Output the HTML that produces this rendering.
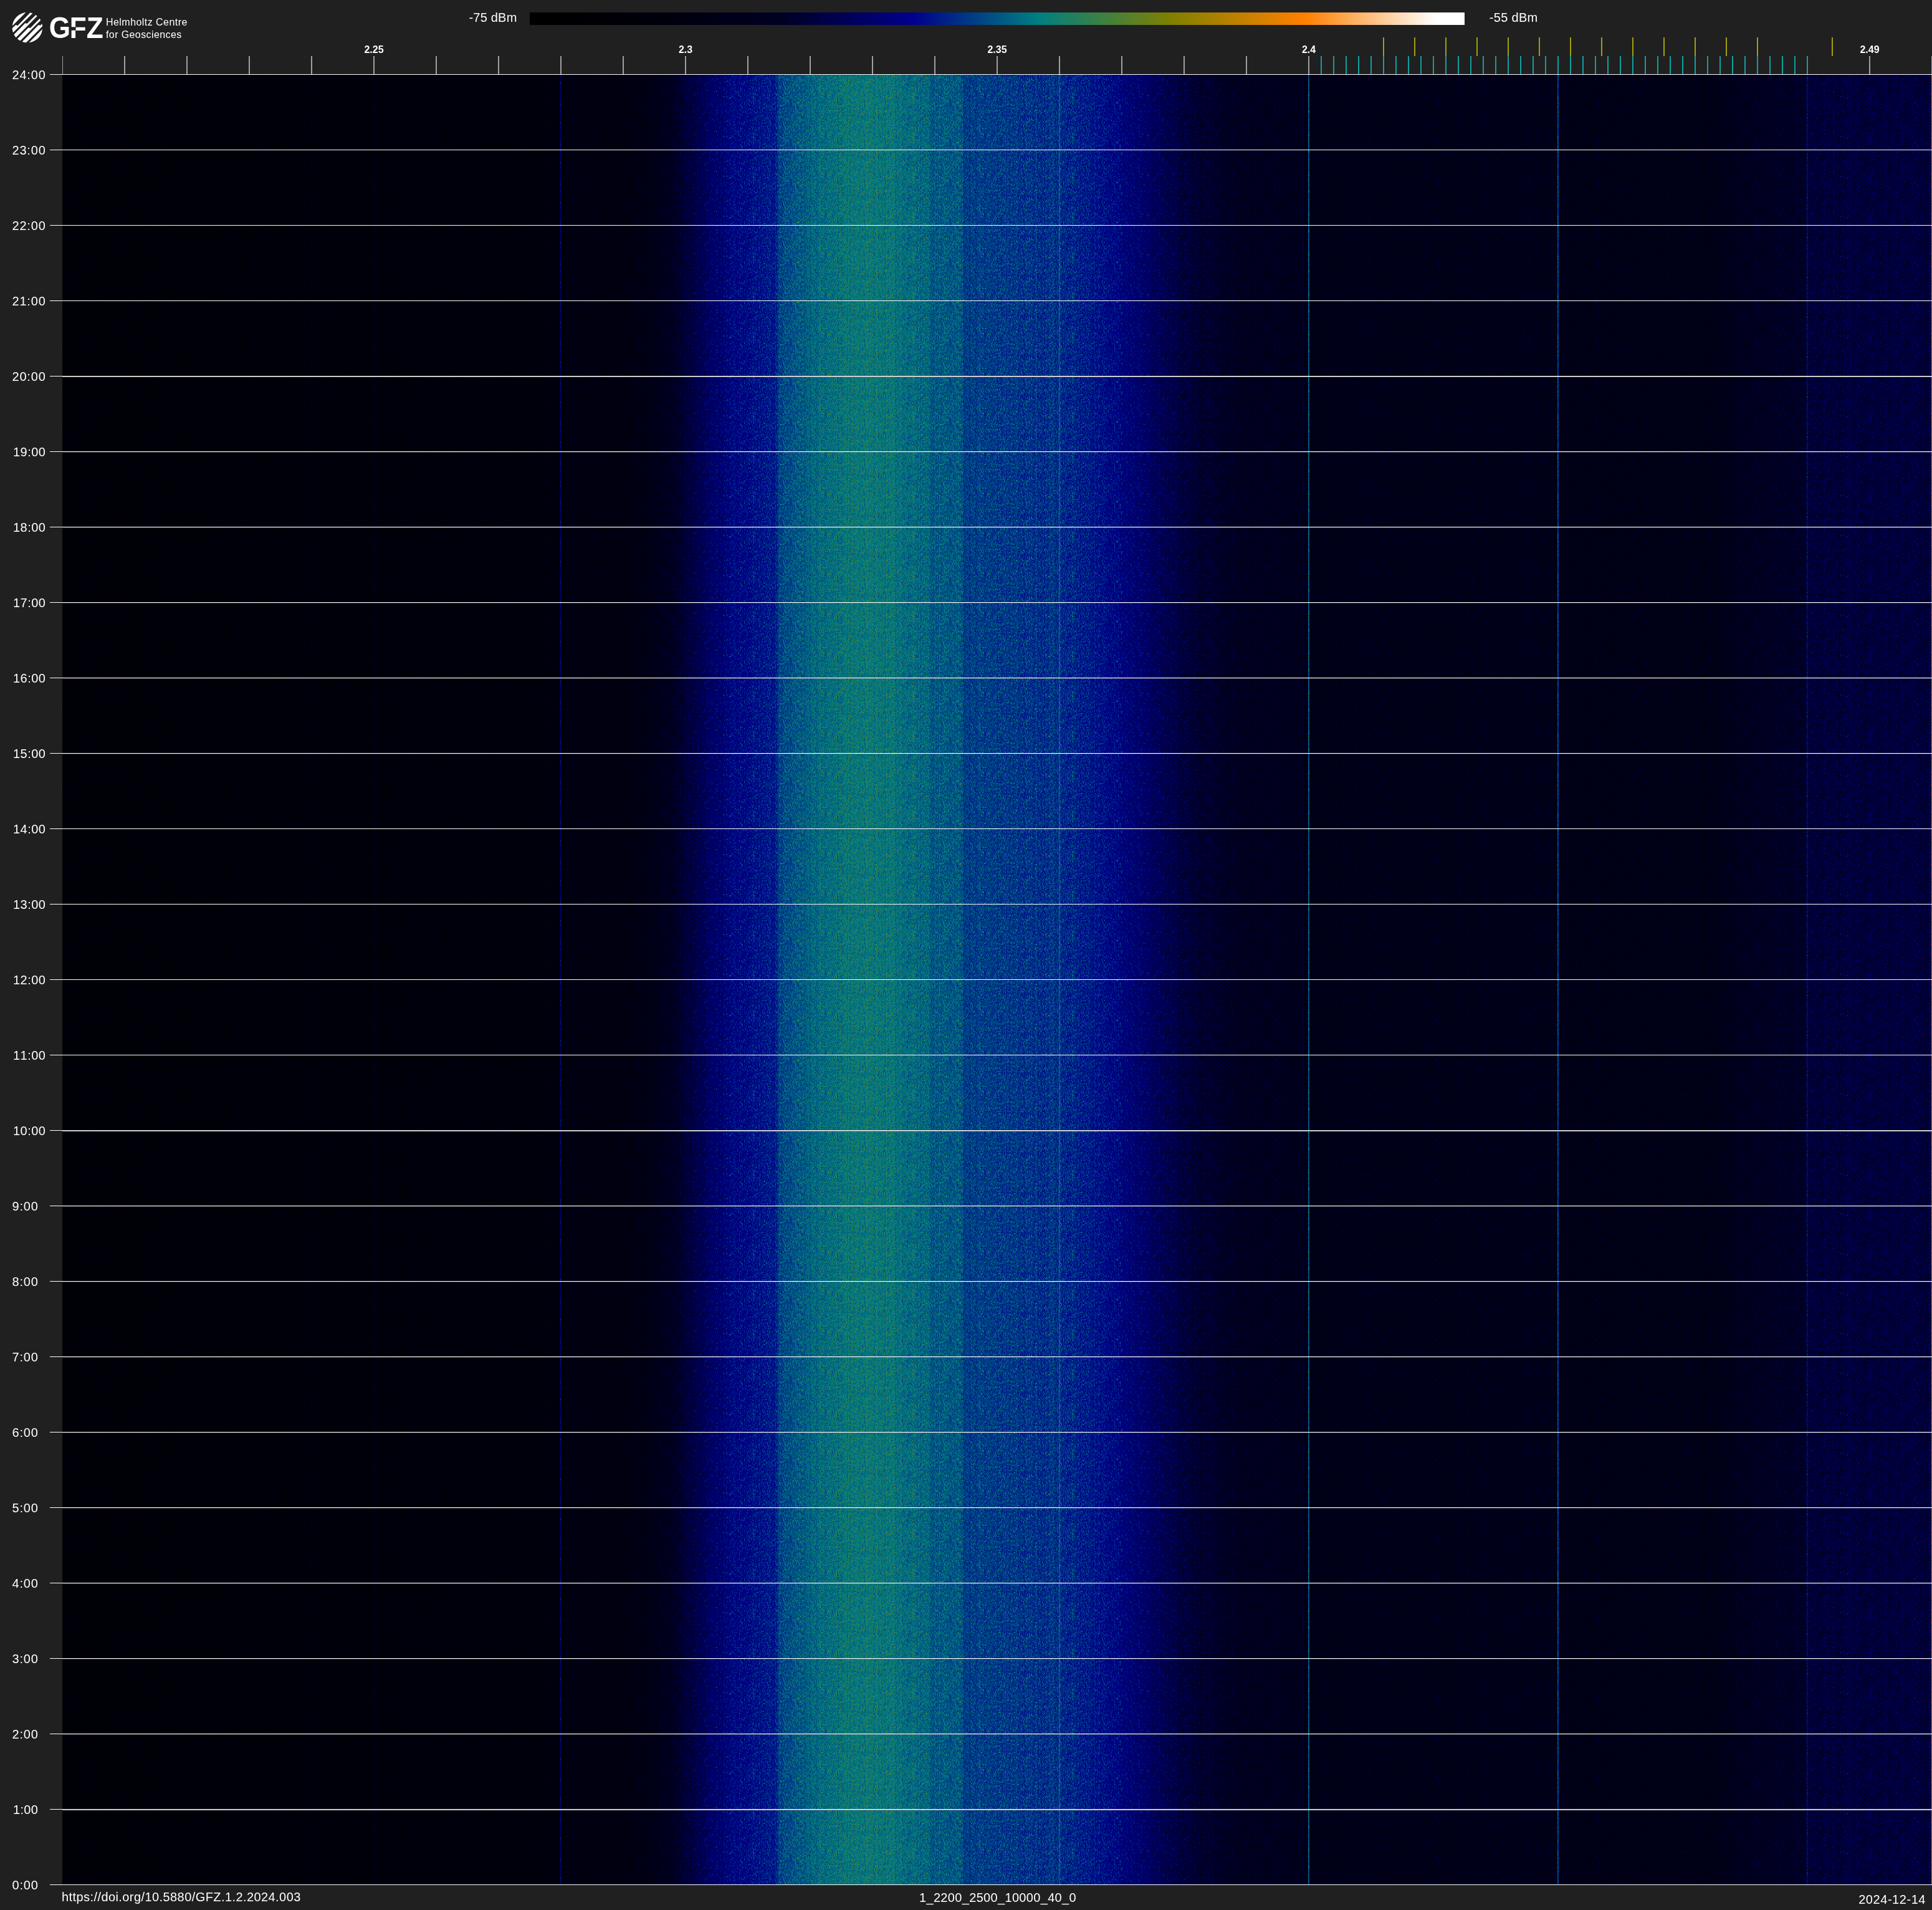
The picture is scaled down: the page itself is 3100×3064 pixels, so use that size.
<!DOCTYPE html>
<html lang="en"><head><meta charset="utf-8"><title>GFZ spectrogram 1_2200_2500_10000_40_0 2024-12-14</title>
<style>html,body{margin:0;padding:0;background:#202020}body{width:3100px;height:3064px}svg{display:block;will-change:transform}text{font-family:"Liberation Sans",Arial,Helvetica,sans-serif;fill:#fff}</style>
</head><body>
<svg width="3100" height="3064" viewBox="0 0 3100 3064" role="img" aria-label="Spectrogram 2.2-2.5 GHz, 2024-12-14">
<defs>
<linearGradient id="cb" x1="0" y1="0" x2="1" y2="0">
<stop offset="0.0000" stop-color="#000000"/>
<stop offset="0.1300" stop-color="#00000a"/>
<stop offset="0.2700" stop-color="#000024"/>
<stop offset="0.4100" stop-color="#00008c"/>
<stop offset="0.5450" stop-color="#008080"/>
<stop offset="0.6860" stop-color="#808000"/>
<stop offset="0.8290" stop-color="#ff8000"/>
<stop offset="0.9700" stop-color="#ffffff"/>
<stop offset="1.0000" stop-color="#ffffff"/>
</linearGradient>
<linearGradient id="vg" gradientUnits="userSpaceOnUse" x1="100" y1="0" x2="3100" y2="0">
<stop offset="0.00000" stop-color="#1a1a1a"/>
<stop offset="0.13333" stop-color="#1f1f1f"/>
<stop offset="0.26600" stop-color="#242424"/>
<stop offset="0.26700" stop-color="#292929"/>
<stop offset="0.30000" stop-color="#2b2b2b"/>
<stop offset="0.31333" stop-color="#323232"/>
<stop offset="0.32567" stop-color="#3e3e3e"/>
<stop offset="0.33333" stop-color="#4a4a4a"/>
<stop offset="0.34233" stop-color="#555555"/>
<stop offset="0.35000" stop-color="#5d5d5d"/>
<stop offset="0.35900" stop-color="#656565"/>
<stop offset="0.36667" stop-color="#6a6a6a"/>
<stop offset="0.38167" stop-color="#707070"/>
<stop offset="0.38333" stop-color="#7a7a7a"/>
<stop offset="0.40333" stop-color="#868686"/>
<stop offset="0.42933" stop-color="#8c8c8c"/>
<stop offset="0.44667" stop-color="#888888"/>
<stop offset="0.46267" stop-color="#858585"/>
<stop offset="0.46400" stop-color="#818181"/>
<stop offset="0.48100" stop-color="#808080"/>
<stop offset="0.48233" stop-color="#7a7a7a"/>
<stop offset="0.51100" stop-color="#777777"/>
<stop offset="0.53333" stop-color="#747474"/>
<stop offset="0.54533" stop-color="#717171"/>
<stop offset="0.56667" stop-color="#656565"/>
<stop offset="0.58333" stop-color="#595959"/>
<stop offset="0.60300" stop-color="#4a4a4a"/>
<stop offset="0.62700" stop-color="#3e3e3e"/>
<stop offset="0.66600" stop-color="#393939"/>
<stop offset="0.66700" stop-color="#343434"/>
<stop offset="0.79933" stop-color="#363636"/>
<stop offset="0.80033" stop-color="#333333"/>
<stop offset="0.88333" stop-color="#333333"/>
<stop offset="0.90000" stop-color="#3c3c3c"/>
<stop offset="0.93267" stop-color="#444444"/>
<stop offset="0.93367" stop-color="#4b4b4b"/>
<stop offset="1.00000" stop-color="#4c4c4c"/>
</linearGradient>
<pattern id="np" patternUnits="userSpaceOnUse" x="100" y="120" width="256" height="64">
<g transform="translate(.5 0)" fill="none" stroke-width="1" stroke-opacity="0.1783" shape-rendering="crispEdges">
<path stroke="#000000" d="M246 0v2M29 4v2M24 8v2M235 8v2M162 12v2M76 16v2M228 16v2M4 18v2M114 18v2M151 18v2M175 18v2M221 26v2M116 30v2M118 38v2M202 50v2M166 52v2M176 52v2M97 54v2M140 56v2M160 56v2M29 58v2M69 62v2"/>
<path stroke="#0b0b0b" d="M105 0v2M118 0v2M122 0v2M228 0v2M17 2v2M29 2v2M114 2v2M166 2v2M226 2v2M4 4v2M22 4v2M33 4v2M115 4v2M149 4v2M162 4v2M176 4v2M185 4v2M254 4v2M23 6v2M63 6v2M98 6v2M176 6v2M200 6v2M71 8v2M175 8v2M204 8v2M166 10v2M175 10v2M219 10v2M114 12v2M168 12v2M184 12v2M226 12v2M240 12v2M34 14v2M90 14v2M100 14v2M114 14v2M183 14v2M71 16v2M79 16v2M213 16v2M220 16v2M17 18v2M79 18v2M108 18v2M200 18v2M160 20v2M162 20v2M194 20v2M198 20v2M215 20v2M75 22v2M118 22v2M130 22v2M213 22v2M4 24v2M126 24v2M194 24v2M204 24v2M223 24v2M29 26v2M148 26v2M175 26v2M194 26v2M43 28v2M56 28v2M101 28v2M118 28v2M126 28v2M232 28v2M79 30v2M94 30v2M108 30v2M201 30v2M7 32v2M23 32v2M118 32v2M176 32v2M196 32v2M200 32v2M211 32v2M254 32v2M6 34v2M58 34v2M71 34v2M97 34v2M175 34v2M151 36v2M56 38v2M73 38v2M235 38v2M254 38v2M6 40v2M13 40v2M105 40v2M175 40v2M176 40v2M181 40v2M186 40v2M199 40v2M204 40v2M226 40v2M59 42v2M148 42v2M175 42v2M247 42v2M40 44v2M166 44v2M168 44v2M221 44v2M40 46v2M68 46v2M122 46v2M123 46v2M145 46v2M186 46v2M200 46v2M223 46v2M7 48v2M17 48v2M140 48v2M249 48v2M35 50v2M38 50v2M81 50v2M93 50v2M240 50v2M6 52v2M40 52v2M83 52v2M4 54v2M17 54v2M39 54v2M75 54v2M223 54v2M4 56v2M67 56v2M95 56v2M162 56v2M187 56v2M109 58v2M118 58v2M168 58v2M176 58v2M202 58v2M246 58v2M76 60v2M185 60v2M223 60v2M7 62v2M37 62v2M105 62v2M194 62v2M204 62v2M211 62v2"/>
<path stroke="#161616" d="M8 0v2M13 0v2M21 0v2M24 0v2M34 0v2M48 0v2M60 0v2M71 0v2M108 0v2M116 0v2M123 0v2M156 0v2M162 0v2M166 0v2M184 0v2M209 0v2M219 0v2M252 0v2M4 2v2M7 2v2M12 2v2M49 2v2M61 2v2M63 2v2M101 2v2M104 2v2M151 2v2M153 2v2M162 2v2M235 2v2M252 2v2M253 2v2M21 4v2M40 4v2M78 4v2M143 4v2M167 4v2M178 4v2M180 4v2M191 4v2M208 4v2M235 4v2M7 6v2M31 6v2M33 6v2M61 6v2M77 6v2M100 6v2M144 6v2M168 6v2M196 6v2M199 6v2M219 6v2M235 6v2M7 8v2M41 8v2M57 8v2M94 8v2M97 8v2M133 8v2M241 8v2M244 8v2M23 10v2M40 10v2M45 10v2M56 10v2M89 10v2M142 10v2M183 10v2M194 10v2M210 10v2M215 10v2M221 10v2M235 10v2M81 12v2M89 12v2M101 12v2M118 12v2M164 12v2M178 12v2M182 12v2M205 12v2M40 14v2M43 14v2M51 14v2M75 14v2M76 14v2M121 14v2M131 14v2M180 14v2M194 14v2M201 14v2M225 14v2M235 14v2M1 16v2M4 16v2M8 16v2M17 16v2M38 16v2M63 16v2M77 16v2M100 16v2M132 16v2M145 16v2M161 16v2M168 16v2M204 16v2M217 16v2M222 16v2M0 18v2M22 18v2M29 18v2M46 18v2M58 18v2M59 18v2M132 18v2M171 18v2M179 18v2M219 18v2M2 20v2M4 20v2M17 20v2M91 20v2M108 20v2M111 20v2M133 20v2M172 20v2M178 20v2M225 20v2M235 20v2M242 20v2M76 22v2M91 22v2M92 22v2M113 22v2M134 22v2M142 22v2M153 22v2M171 22v2M184 22v2M238 22v2M240 22v2M248 22v2M51 24v2M58 24v2M76 24v2M81 24v2M91 24v2M117 24v2M122 24v2M131 24v2M160 24v2M184 24v2M207 24v2M216 24v2M220 24v2M232 24v2M240 24v2M247 24v2M253 24v2M254 24v2M17 26v2M44 26v2M46 26v2M58 26v2M76 26v2M101 26v2M162 26v2M182 26v2M186 26v2M202 26v2M213 26v2M215 26v2M240 26v2M242 26v2M255 26v2M4 28v2M97 28v2M103 28v2M105 28v2M125 28v2M186 28v2M191 28v2M200 28v2M229 28v2M7 30v2M22 30v2M45 30v2M62 30v2M69 30v2M96 30v2M106 30v2M118 30v2M177 30v2M187 30v2M238 30v2M252 30v2M4 32v2M38 32v2M39 32v2M114 32v2M130 32v2M134 32v2M153 32v2M186 32v2M223 32v2M10 34v2M32 34v2M45 34v2M116 34v2M132 34v2M166 34v2M176 34v2M182 34v2M201 34v2M211 34v2M215 34v2M235 34v2M2 36v2M59 36v2M90 36v2M91 36v2M98 36v2M99 36v2M126 36v2M138 36v2M139 36v2M211 36v2M219 36v2M220 36v2M228 36v2M89 38v2M97 38v2M125 38v2M145 38v2M196 38v2M216 38v2M220 38v2M225 38v2M238 38v2M240 38v2M30 40v2M33 40v2M122 40v2M143 40v2M144 40v2M235 40v2M238 40v2M6 42v2M33 42v2M34 42v2M91 42v2M105 42v2M113 42v2M121 42v2M144 42v2M167 42v2M202 42v2M220 42v2M240 42v2M48 44v2M77 44v2M121 44v2M123 44v2M143 44v2M174 44v2M191 44v2M215 44v2M220 44v2M235 44v2M27 46v2M67 46v2M75 46v2M82 46v2M89 46v2M95 46v2M111 46v2M194 46v2M224 46v2M116 48v2M137 48v2M154 48v2M175 48v2M209 48v2M225 48v2M7 50v2M79 50v2M102 50v2M114 50v2M139 50v2M144 50v2M166 50v2M194 50v2M230 50v2M69 52v2M79 52v2M88 52v2M96 52v2M97 52v2M113 52v2M118 52v2M156 52v2M157 52v2M207 52v2M13 54v2M33 54v2M91 54v2M96 54v2M143 54v2M144 54v2M150 54v2M190 54v2M200 54v2M211 54v2M215 54v2M8 56v2M23 56v2M38 56v2M93 56v2M101 56v2M103 56v2M109 56v2M124 56v2M129 56v2M183 56v2M194 56v2M201 56v2M221 56v2M226 56v2M227 56v2M244 56v2M4 58v2M13 58v2M61 58v2M112 58v2M172 58v2M184 58v2M199 58v2M213 58v2M223 58v2M235 58v2M240 58v2M249 58v2M4 60v2M24 60v2M48 60v2M97 60v2M118 60v2M168 60v2M221 60v2M226 60v2M228 60v2M229 60v2M254 60v2M12 62v2M38 62v2M60 62v2M96 62v2M115 62v2M118 62v2M129 62v2M177 62v2M216 62v2"/>
<path stroke="#212121" d="M4 0v2M9 0v2M29 0v2M30 0v2M33 0v2M56 0v2M65 0v2M68 0v2M69 0v2M80 0v2M102 0v2M103 0v2M109 0v2M114 0v2M126 0v2M133 0v2M159 0v2M167 0v2M171 0v2M182 0v2M189 0v2M195 0v2M201 0v2M203 0v2M216 0v2M221 0v2M225 0v2M232 0v2M235 0v2M237 0v2M241 0v2M244 0v2M249 0v2M20 2v2M34 2v2M37 2v2M45 2v2M67 2v2M79 2v2M80 2v2M81 2v2M89 2v2M107 2v2M108 2v2M140 2v2M149 2v2M164 2v2M178 2v2M185 2v2M191 2v2M198 2v2M211 2v2M231 2v2M232 2v2M254 2v2M0 4v2M1 4v2M2 4v2M8 4v2M11 4v2M13 4v2M14 4v2M17 4v2M28 4v2M38 4v2M68 4v2M71 4v2M77 4v2M82 4v2M93 4v2M96 4v2M99 4v2M100 4v2M102 4v2M118 4v2M136 4v2M144 4v2M164 4v2M165 4v2M171 4v2M181 4v2M187 4v2M198 4v2M201 4v2M209 4v2M223 4v2M224 4v2M227 4v2M246 4v2M2 6v2M4 6v2M6 6v2M35 6v2M36 6v2M41 6v2M43 6v2M67 6v2M69 6v2M71 6v2M74 6v2M78 6v2M80 6v2M97 6v2M105 6v2M107 6v2M111 6v2M127 6v2M129 6v2M130 6v2M151 6v2M153 6v2M171 6v2M178 6v2M186 6v2M202 6v2M216 6v2M223 6v2M231 6v2M241 6v2M243 6v2M248 6v2M6 8v2M12 8v2M17 8v2M38 8v2M52 8v2M70 8v2M77 8v2M78 8v2M81 8v2M88 8v2M93 8v2M96 8v2M105 8v2M108 8v2M109 8v2M113 8v2M115 8v2M149 8v2M153 8v2M162 8v2M202 8v2M207 8v2M211 8v2M212 8v2M233 8v2M251 8v2M21 10v2M31 10v2M36 10v2M52 10v2M57 10v2M79 10v2M81 10v2M83 10v2M86 10v2M95 10v2M113 10v2M115 10v2M117 10v2M118 10v2M126 10v2M140 10v2M162 10v2M168 10v2M172 10v2M193 10v2M197 10v2M198 10v2M206 10v2M208 10v2M217 10v2M227 10v2M241 10v2M249 10v2M19 12v2M23 12v2M55 12v2M56 12v2M67 12v2M75 12v2M76 12v2M84 12v2M86 12v2M115 12v2M131 12v2M140 12v2M142 12v2M147 12v2M163 12v2M165 12v2M176 12v2M189 12v2M202 12v2M207 12v2M211 12v2M221 12v2M225 12v2M246 12v2M12 14v2M14 14v2M23 14v2M28 14v2M57 14v2M63 14v2M74 14v2M81 14v2M86 14v2M91 14v2M105 14v2M107 14v2M123 14v2M139 14v2M159 14v2M160 14v2M178 14v2M179 14v2M186 14v2M207 14v2M255 14v2M26 16v2M35 16v2M65 16v2M66 16v2M83 16v2M84 16v2M89 16v2M93 16v2M103 16v2M118 16v2M122 16v2M127 16v2M128 16v2M144 16v2M159 16v2M186 16v2M196 16v2M198 16v2M199 16v2M231 16v2M238 16v2M254 16v2M2 18v2M12 18v2M14 18v2M33 18v2M34 18v2M38 18v2M55 18v2M56 18v2M67 18v2M88 18v2M92 18v2M100 18v2M105 18v2M113 18v2M165 18v2M174 18v2M182 18v2M196 18v2M208 18v2M211 18v2M221 18v2M240 18v2M244 18v2M8 20v2M13 20v2M15 20v2M29 20v2M36 20v2M62 20v2M63 20v2M66 20v2M68 20v2M96 20v2M104 20v2M109 20v2M112 20v2M129 20v2M138 20v2M151 20v2M161 20v2M174 20v2M175 20v2M185 20v2M186 20v2M205 20v2M211 20v2M228 20v2M245 20v2M247 20v2M255 20v2M15 22v2M23 22v2M24 22v2M31 22v2M35 22v2M43 22v2M45 22v2M48 22v2M55 22v2M56 22v2M69 22v2M74 22v2M87 22v2M95 22v2M106 22v2M114 22v2M119 22v2M123 22v2M147 22v2M154 22v2M175 22v2M205 22v2M206 22v2M249 22v2M254 22v2M22 24v2M31 24v2M53 24v2M75 24v2M84 24v2M96 24v2M98 24v2M99 24v2M105 24v2M110 24v2M111 24v2M140 24v2M151 24v2M162 24v2M163 24v2M168 24v2M174 24v2M195 24v2M202 24v2M213 24v2M221 24v2M224 24v2M242 24v2M249 24v2M251 24v2M13 26v2M15 26v2M23 26v2M35 26v2M36 26v2M40 26v2M45 26v2M98 26v2M131 26v2M137 26v2M144 26v2M146 26v2M154 26v2M156 26v2M159 26v2M165 26v2M166 26v2M167 26v2M180 26v2M188 26v2M205 26v2M226 26v2M238 26v2M5 28v2M9 28v2M15 28v2M17 28v2M24 28v2M45 28v2M46 28v2M58 28v2M66 28v2M82 28v2M93 28v2M96 28v2M98 28v2M123 28v2M132 28v2M143 28v2M150 28v2M160 28v2M161 28v2M162 28v2M167 28v2M172 28v2M173 28v2M185 28v2M202 28v2M216 28v2M231 28v2M239 28v2M246 28v2M0 30v2M23 30v2M29 30v2M31 30v2M32 30v2M36 30v2M63 30v2M74 30v2M83 30v2M90 30v2M92 30v2M112 30v2M143 30v2M147 30v2M154 30v2M172 30v2M200 30v2M211 30v2M235 30v2M245 30v2M22 32v2M31 32v2M59 32v2M62 32v2M67 32v2M69 32v2M75 32v2M105 32v2M108 32v2M120 32v2M128 32v2M129 32v2M137 32v2M142 32v2M146 32v2M162 32v2M166 32v2M169 32v2M184 32v2M204 32v2M212 32v2M239 32v2M2 34v2M28 34v2M33 34v2M56 34v2M89 34v2M90 34v2M91 34v2M93 34v2M105 34v2M123 34v2M131 34v2M149 34v2M180 34v2M183 34v2M198 34v2M200 34v2M219 34v2M223 34v2M27 36v2M30 36v2M32 36v2M40 36v2M75 36v2M79 36v2M82 36v2M93 36v2M94 36v2M96 36v2M110 36v2M122 36v2M125 36v2M149 36v2M153 36v2M163 36v2M170 36v2M180 36v2M205 36v2M212 36v2M214 36v2M225 36v2M246 36v2M250 36v2M4 38v2M6 38v2M17 38v2M21 38v2M39 38v2M46 38v2M61 38v2M71 38v2M75 38v2M98 38v2M101 38v2M108 38v2M141 38v2M147 38v2M166 38v2M167 38v2M185 38v2M189 38v2M194 38v2M198 38v2M203 38v2M213 38v2M219 38v2M221 38v2M223 38v2M224 38v2M39 40v2M66 40v2M75 40v2M96 40v2M107 40v2M129 40v2M131 40v2M158 40v2M171 40v2M173 40v2M180 40v2M194 40v2M227 40v2M232 40v2M4 42v2M7 42v2M8 42v2M11 42v2M20 42v2M40 42v2M50 42v2M56 42v2M87 42v2M93 42v2M96 42v2M108 42v2M116 42v2M151 42v2M156 42v2M162 42v2M171 42v2M187 42v2M193 42v2M194 42v2M197 42v2M200 42v2M212 42v2M222 42v2M228 42v2M242 42v2M6 44v2M17 44v2M68 44v2M90 44v2M101 44v2M109 44v2M112 44v2M134 44v2M140 44v2M144 44v2M146 44v2M151 44v2M160 44v2M164 44v2M195 44v2M226 44v2M228 44v2M241 44v2M243 44v2M246 44v2M22 46v2M32 46v2M46 46v2M71 46v2M79 46v2M83 46v2M93 46v2M97 46v2M98 46v2M120 46v2M128 46v2M131 46v2M143 46v2M167 46v2M173 46v2M180 46v2M189 46v2M207 46v2M218 46v2M219 46v2M222 46v2M225 46v2M226 46v2M246 46v2M0 48v2M6 48v2M23 48v2M24 48v2M56 48v2M60 48v2M61 48v2M68 48v2M70 48v2M91 48v2M95 48v2M101 48v2M114 48v2M135 48v2M143 48v2M145 48v2M146 48v2M178 48v2M181 48v2M204 48v2M216 48v2M238 48v2M240 48v2M17 50v2M46 50v2M59 50v2M62 50v2M63 50v2M68 50v2M71 50v2M80 50v2M91 50v2M97 50v2M99 50v2M133 50v2M136 50v2M150 50v2M164 50v2M175 50v2M187 50v2M209 50v2M214 50v2M245 50v2M248 50v2M249 50v2M254 50v2M255 50v2M15 52v2M24 52v2M43 52v2M44 52v2M68 52v2M77 52v2M92 52v2M104 52v2M122 52v2M125 52v2M149 52v2M155 52v2M168 52v2M169 52v2M196 52v2M213 52v2M216 52v2M217 52v2M226 52v2M229 52v2M231 52v2M232 52v2M235 52v2M255 52v2M1 54v2M3 54v2M8 54v2M21 54v2M31 54v2M34 54v2M40 54v2M43 54v2M45 54v2M88 54v2M108 54v2M122 54v2M147 54v2M156 54v2M158 54v2M162 54v2M186 54v2M206 54v2M222 54v2M226 54v2M235 54v2M240 54v2M22 56v2M56 56v2M77 56v2M78 56v2M87 56v2M90 56v2M102 56v2M114 56v2M117 56v2M122 56v2M133 56v2M148 56v2M150 56v2M157 56v2M169 56v2M170 56v2M184 56v2M225 56v2M235 56v2M240 56v2M246 56v2M255 56v2M0 58v2M56 58v2M58 58v2M64 58v2M76 58v2M79 58v2M89 58v2M92 58v2M103 58v2M114 58v2M146 58v2M196 58v2M209 58v2M0 60v2M6 60v2M8 60v2M13 60v2M17 60v2M21 60v2M40 60v2M43 60v2M56 60v2M57 60v2M73 60v2M99 60v2M100 60v2M116 60v2M144 60v2M145 60v2M147 60v2M164 60v2M170 60v2M184 60v2M188 60v2M196 60v2M214 60v2M220 60v2M242 60v2M245 60v2M255 60v2M24 62v2M28 62v2M30 62v2M39 62v2M40 62v2M43 62v2M48 62v2M50 62v2M79 62v2M89 62v2M94 62v2M97 62v2M100 62v2M103 62v2M116 62v2M121 62v2M126 62v2M133 62v2M140 62v2M146 62v2M159 62v2M166 62v2M168 62v2M176 62v2M185 62v2M187 62v2M199 62v2M202 62v2M207 62v2M221 62v2M231 62v2"/>
<path stroke="#2c2c2c" d="M10 0v2M15 0v2M37 0v2M40 0v2M41 0v2M57 0v2M77 0v2M81 0v2M86 0v2M89 0v2M93 0v2M113 0v2M131 0v2M132 0v2M140 0v2M143 0v2M157 0v2M175 0v2M185 0v2M187 0v2M190 0v2M194 0v2M196 0v2M198 0v2M206 0v2M212 0v2M213 0v2M215 0v2M220 0v2M227 0v2M229 0v2M231 0v2M238 0v2M242 0v2M247 0v2M248 0v2M3 2v2M8 2v2M15 2v2M25 2v2M30 2v2M40 2v2M70 2v2M71 2v2M84 2v2M85 2v2M93 2v2M98 2v2M103 2v2M117 2v2M118 2v2M121 2v2M130 2v2M134 2v2M141 2v2M142 2v2M170 2v2M207 2v2M213 2v2M216 2v2M220 2v2M243 2v2M244 2v2M245 2v2M249 2v2M3 4v2M23 4v2M27 4v2M34 4v2M36 4v2M52 4v2M56 4v2M61 4v2M65 4v2M69 4v2M80 4v2M83 4v2M91 4v2M97 4v2M116 4v2M123 4v2M135 4v2M137 4v2M140 4v2M163 4v2M196 4v2M197 4v2M207 4v2M210 4v2M212 4v2M220 4v2M228 4v2M243 4v2M247 4v2M250 4v2M11 6v2M14 6v2M17 6v2M22 6v2M46 6v2M56 6v2M75 6v2M76 6v2M79 6v2M83 6v2M92 6v2M102 6v2M133 6v2M140 6v2M143 6v2M146 6v2M175 6v2M214 6v2M220 6v2M237 6v2M240 6v2M246 6v2M250 6v2M0 8v2M1 8v2M11 8v2M14 8v2M19 8v2M31 8v2M32 8v2M34 8v2M37 8v2M50 8v2M59 8v2M75 8v2M98 8v2M100 8v2M116 8v2M122 8v2M143 8v2M156 8v2M176 8v2M177 8v2M180 8v2M191 8v2M194 8v2M201 8v2M216 8v2M248 8v2M249 8v2M252 8v2M255 8v2M20 10v2M39 10v2M48 10v2M63 10v2M65 10v2M66 10v2M73 10v2M77 10v2M78 10v2M80 10v2M84 10v2M91 10v2M96 10v2M99 10v2M101 10v2M102 10v2M127 10v2M133 10v2M134 10v2M137 10v2M138 10v2M145 10v2M146 10v2M148 10v2M157 10v2M165 10v2M171 10v2M179 10v2M180 10v2M189 10v2M202 10v2M223 10v2M238 10v2M239 10v2M246 10v2M1 12v2M2 12v2M3 12v2M8 12v2M29 12v2M34 12v2M46 12v2M61 12v2M64 12v2M85 12v2M91 12v2M95 12v2M97 12v2M107 12v2M108 12v2M129 12v2M138 12v2M151 12v2M155 12v2M156 12v2M159 12v2M174 12v2M214 12v2M215 12v2M220 12v2M229 12v2M245 12v2M250 12v2M4 14v2M15 14v2M22 14v2M30 14v2M31 14v2M37 14v2M39 14v2M45 14v2M50 14v2M62 14v2M67 14v2M73 14v2M79 14v2M89 14v2M96 14v2M103 14v2M106 14v2M108 14v2M124 14v2M126 14v2M136 14v2M137 14v2M138 14v2M140 14v2M145 14v2M153 14v2M166 14v2M169 14v2M170 14v2M172 14v2M174 14v2M182 14v2M195 14v2M209 14v2M217 14v2M218 14v2M223 14v2M229 14v2M238 14v2M239 14v2M251 14v2M14 16v2M19 16v2M40 16v2M57 16v2M75 16v2M82 16v2M85 16v2M87 16v2M101 16v2M102 16v2M130 16v2M131 16v2M136 16v2M141 16v2M170 16v2M175 16v2M177 16v2M180 16v2M181 16v2M185 16v2M188 16v2M189 16v2M190 16v2M210 16v2M216 16v2M221 16v2M227 16v2M230 16v2M236 16v2M240 16v2M245 16v2M247 16v2M248 16v2M253 16v2M1 18v2M7 18v2M23 18v2M37 18v2M42 18v2M48 18v2M62 18v2M65 18v2M69 18v2M70 18v2M76 18v2M78 18v2M85 18v2M93 18v2M102 18v2M118 18v2M137 18v2M142 18v2M145 18v2M156 18v2M166 18v2M169 18v2M176 18v2M181 18v2M198 18v2M204 18v2M209 18v2M215 18v2M228 18v2M232 18v2M246 18v2M249 18v2M250 18v2M9 20v2M10 20v2M12 20v2M19 20v2M21 20v2M34 20v2M35 20v2M40 20v2M50 20v2M69 20v2M70 20v2M71 20v2M81 20v2M98 20v2M101 20v2M102 20v2M106 20v2M118 20v2M126 20v2M137 20v2M143 20v2M150 20v2M152 20v2M156 20v2M166 20v2M168 20v2M170 20v2M171 20v2M200 20v2M208 20v2M222 20v2M224 20v2M229 20v2M234 20v2M251 20v2M1 22v2M10 22v2M39 22v2M61 22v2M70 22v2M82 22v2M96 22v2M105 22v2M169 22v2M172 22v2M178 22v2M181 22v2M188 22v2M190 22v2M194 22v2M220 22v2M234 22v2M245 22v2M253 22v2M6 24v2M7 24v2M20 24v2M23 24v2M26 24v2M28 24v2M40 24v2M41 24v2M52 24v2M57 24v2M61 24v2M67 24v2M68 24v2M82 24v2M85 24v2M100 24v2M108 24v2M115 24v2M118 24v2M120 24v2M123 24v2M128 24v2M130 24v2M137 24v2M141 24v2M146 24v2M154 24v2M157 24v2M158 24v2M165 24v2M166 24v2M175 24v2M177 24v2M183 24v2M187 24v2M199 24v2M200 24v2M201 24v2M235 24v2M6 26v2M14 26v2M24 26v2M31 26v2M37 26v2M39 26v2M60 26v2M68 26v2M71 26v2M74 26v2M81 26v2M85 26v2M88 26v2M92 26v2M95 26v2M106 26v2M108 26v2M115 26v2M122 26v2M128 26v2M132 26v2M181 26v2M185 26v2M199 26v2M203 26v2M212 26v2M223 26v2M228 26v2M230 26v2M233 26v2M239 26v2M254 26v2M6 28v2M10 28v2M11 28v2M13 28v2M22 28v2M27 28v2M31 28v2M34 28v2M40 28v2M41 28v2M52 28v2M65 28v2M77 28v2M81 28v2M91 28v2M95 28v2M112 28v2M113 28v2M114 28v2M130 28v2M144 28v2M149 28v2M154 28v2M156 28v2M164 28v2M198 28v2M206 28v2M215 28v2M217 28v2M237 28v2M247 28v2M5 30v2M21 30v2M35 30v2M38 30v2M57 30v2M65 30v2M103 30v2M104 30v2M126 30v2M129 30v2M151 30v2M162 30v2M170 30v2M171 30v2M180 30v2M185 30v2M186 30v2M189 30v2M214 30v2M215 30v2M217 30v2M232 30v2M240 30v2M241 30v2M253 30v2M1 32v2M6 32v2M15 32v2M36 32v2M46 32v2M50 32v2M64 32v2M97 32v2M123 32v2M126 32v2M138 32v2M140 32v2M150 32v2M171 32v2M179 32v2M193 32v2M219 32v2M225 32v2M227 32v2M231 32v2M4 34v2M17 34v2M22 34v2M26 34v2M29 34v2M36 34v2M39 34v2M53 34v2M55 34v2M61 34v2M63 34v2M67 34v2M79 34v2M86 34v2M88 34v2M108 34v2M115 34v2M121 34v2M124 34v2M134 34v2M156 34v2M171 34v2M179 34v2M190 34v2M195 34v2M199 34v2M202 34v2M208 34v2M229 34v2M240 34v2M242 34v2M243 34v2M248 34v2M254 34v2M255 34v2M11 36v2M20 36v2M33 36v2M57 36v2M58 36v2M63 36v2M73 36v2M80 36v2M83 36v2M92 36v2M102 36v2M106 36v2M141 36v2M148 36v2M152 36v2M160 36v2M188 36v2M196 36v2M201 36v2M208 36v2M209 36v2M226 36v2M251 36v2M253 36v2M11 38v2M13 38v2M20 38v2M22 38v2M24 38v2M36 38v2M51 38v2M53 38v2M60 38v2M62 38v2M63 38v2M69 38v2M72 38v2M81 38v2M90 38v2M93 38v2M116 38v2M122 38v2M129 38v2M131 38v2M136 38v2M151 38v2M154 38v2M160 38v2M168 38v2M171 38v2M175 38v2M177 38v2M184 38v2M193 38v2M201 38v2M204 38v2M241 38v2M246 38v2M247 38v2M7 40v2M14 40v2M31 40v2M40 40v2M43 40v2M48 40v2M52 40v2M58 40v2M59 40v2M69 40v2M71 40v2M72 40v2M74 40v2M82 40v2M86 40v2M97 40v2M101 40v2M114 40v2M130 40v2M145 40v2M146 40v2M155 40v2M174 40v2M184 40v2M187 40v2M196 40v2M210 40v2M212 40v2M219 40v2M223 40v2M225 40v2M229 40v2M246 40v2M1 42v2M12 42v2M35 42v2M44 42v2M55 42v2M61 42v2M63 42v2M83 42v2M95 42v2M98 42v2M102 42v2M124 42v2M125 42v2M130 42v2M133 42v2M143 42v2M146 42v2M150 42v2M153 42v2M154 42v2M159 42v2M161 42v2M179 42v2M189 42v2M201 42v2M205 42v2M216 42v2M219 42v2M224 42v2M226 42v2M229 42v2M255 42v2M2 44v2M23 44v2M29 44v2M30 44v2M31 44v2M56 44v2M59 44v2M60 44v2M64 44v2M69 44v2M73 44v2M79 44v2M83 44v2M93 44v2M99 44v2M108 44v2M115 44v2M116 44v2M117 44v2M133 44v2M162 44v2M180 44v2M189 44v2M192 44v2M193 44v2M197 44v2M198 44v2M200 44v2M204 44v2M208 44v2M209 44v2M210 44v2M213 44v2M214 44v2M234 44v2M244 44v2M7 46v2M19 46v2M20 46v2M23 46v2M35 46v2M38 46v2M60 46v2M61 46v2M73 46v2M87 46v2M108 46v2M130 46v2M137 46v2M147 46v2M169 46v2M198 46v2M202 46v2M206 46v2M213 46v2M230 46v2M240 46v2M245 46v2M250 46v2M254 46v2M1 48v2M13 48v2M22 48v2M26 48v2M29 48v2M40 48v2M43 48v2M44 48v2M45 48v2M50 48v2M51 48v2M67 48v2M72 48v2M79 48v2M84 48v2M86 48v2M92 48v2M93 48v2M104 48v2M107 48v2M118 48v2M126 48v2M138 48v2M168 48v2M172 48v2M182 48v2M186 48v2M187 48v2M188 48v2M213 48v2M221 48v2M233 48v2M9 50v2M30 50v2M40 50v2M52 50v2M77 50v2M85 50v2M98 50v2M103 50v2M116 50v2M118 50v2M122 50v2M125 50v2M126 50v2M141 50v2M142 50v2M146 50v2M148 50v2M151 50v2M156 50v2M162 50v2M172 50v2M181 50v2M186 50v2M196 50v2M200 50v2M204 50v2M212 50v2M220 50v2M231 50v2M236 50v2M238 50v2M239 50v2M241 50v2M243 50v2M8 52v2M17 52v2M22 52v2M37 52v2M39 52v2M41 52v2M46 52v2M50 52v2M57 52v2M58 52v2M59 52v2M61 52v2M62 52v2M71 52v2M75 52v2M76 52v2M81 52v2M82 52v2M90 52v2M93 52v2M107 52v2M121 52v2M124 52v2M130 52v2M140 52v2M146 52v2M160 52v2M175 52v2M177 52v2M187 52v2M191 52v2M194 52v2M202 52v2M204 52v2M206 52v2M221 52v2M224 52v2M228 52v2M246 52v2M252 52v2M23 54v2M24 54v2M26 54v2M29 54v2M37 54v2M50 54v2M54 54v2M56 54v2M59 54v2M69 54v2M78 54v2M83 54v2M84 54v2M87 54v2M94 54v2M104 54v2M124 54v2M135 54v2M141 54v2M160 54v2M164 54v2M168 54v2M175 54v2M178 54v2M183 54v2M194 54v2M198 54v2M207 54v2M210 54v2M220 54v2M228 54v2M230 54v2M239 54v2M242 54v2M3 56v2M5 56v2M11 56v2M44 56v2M50 56v2M59 56v2M61 56v2M66 56v2M75 56v2M80 56v2M84 56v2M94 56v2M100 56v2M121 56v2M134 56v2M151 56v2M152 56v2M159 56v2M174 56v2M182 56v2M185 56v2M189 56v2M204 56v2M215 56v2M228 56v2M238 56v2M245 56v2M247 56v2M252 56v2M9 58v2M14 58v2M20 58v2M22 58v2M53 58v2M54 58v2M83 58v2M94 58v2M110 58v2M122 58v2M126 58v2M142 58v2M144 58v2M151 58v2M159 58v2M166 58v2M201 58v2M204 58v2M217 58v2M221 58v2M224 58v2M228 58v2M232 58v2M234 58v2M241 58v2M22 60v2M33 60v2M36 60v2M38 60v2M39 60v2M46 60v2M51 60v2M65 60v2M69 60v2M71 60v2M77 60v2M86 60v2M90 60v2M106 60v2M108 60v2M111 60v2M114 60v2M121 60v2M125 60v2M135 60v2M136 60v2M138 60v2M146 60v2M149 60v2M166 60v2M174 60v2M175 60v2M178 60v2M183 60v2M186 60v2M189 60v2M191 60v2M193 60v2M199 60v2M210 60v2M211 60v2M215 60v2M217 60v2M219 60v2M227 60v2M232 60v2M238 60v2M239 60v2M247 60v2M253 60v2M8 62v2M10 62v2M17 62v2M20 62v2M31 62v2M36 62v2M49 62v2M57 62v2M72 62v2M77 62v2M80 62v2M84 62v2M88 62v2M92 62v2M93 62v2M98 62v2M108 62v2M111 62v2M113 62v2M120 62v2M128 62v2M130 62v2M136 62v2M144 62v2M153 62v2M165 62v2M172 62v2M180 62v2M181 62v2M189 62v2M201 62v2M203 62v2M228 62v2M234 62v2M241 62v2M243 62v2M244 62v2M252 62v2"/>
<path stroke="#373737" d="M1 0v2M2 0v2M7 0v2M28 0v2M39 0v2M49 0v2M51 0v2M59 0v2M67 0v2M70 0v2M75 0v2M76 0v2M78 0v2M87 0v2M91 0v2M112 0v2M124 0v2M136 0v2M150 0v2M154 0v2M158 0v2M160 0v2M164 0v2M173 0v2M174 0v2M205 0v2M208 0v2M214 0v2M226 0v2M234 0v2M236 0v2M240 0v2M245 0v2M254 0v2M1 2v2M6 2v2M11 2v2M14 2v2M23 2v2M31 2v2M33 2v2M41 2v2M46 2v2M65 2v2M73 2v2M83 2v2M87 2v2M91 2v2M95 2v2M102 2v2M113 2v2M123 2v2M135 2v2M136 2v2M137 2v2M159 2v2M161 2v2M163 2v2M168 2v2M176 2v2M187 2v2M188 2v2M189 2v2M199 2v2M200 2v2M202 2v2M203 2v2M219 2v2M238 2v2M241 2v2M255 2v2M16 4v2M18 4v2M20 4v2M25 4v2M30 4v2M45 4v2M46 4v2M53 4v2M55 4v2M59 4v2M66 4v2M72 4v2M76 4v2M81 4v2M92 4v2M104 4v2M120 4v2M131 4v2M152 4v2M159 4v2M169 4v2M173 4v2M189 4v2M192 4v2M200 4v2M219 4v2M230 4v2M238 4v2M248 4v2M252 4v2M1 6v2M5 6v2M8 6v2M20 6v2M28 6v2M38 6v2M39 6v2M40 6v2M42 6v2M48 6v2M49 6v2M51 6v2M54 6v2M57 6v2M81 6v2M86 6v2M96 6v2M99 6v2M101 6v2M104 6v2M112 6v2M117 6v2M119 6v2M125 6v2M128 6v2M134 6v2M149 6v2M150 6v2M164 6v2M166 6v2M169 6v2M173 6v2M183 6v2M185 6v2M194 6v2M195 6v2M201 6v2M203 6v2M209 6v2M217 6v2M228 6v2M233 6v2M251 6v2M254 6v2M9 8v2M42 8v2M58 8v2M60 8v2M63 8v2M65 8v2M67 8v2M72 8v2M73 8v2M85 8v2M91 8v2M92 8v2M106 8v2M114 8v2M118 8v2M124 8v2M128 8v2M130 8v2M137 8v2M140 8v2M144 8v2M151 8v2M152 8v2M166 8v2M169 8v2M170 8v2M171 8v2M172 8v2M179 8v2M182 8v2M184 8v2M187 8v2M200 8v2M210 8v2M219 8v2M228 8v2M238 8v2M242 8v2M245 8v2M0 10v2M2 10v2M15 10v2M18 10v2M24 10v2M60 10v2M62 10v2M71 10v2M88 10v2M90 10v2M92 10v2M100 10v2M104 10v2M105 10v2M107 10v2M119 10v2M124 10v2M135 10v2M154 10v2M174 10v2M178 10v2M181 10v2M182 10v2M186 10v2M195 10v2M196 10v2M209 10v2M214 10v2M222 10v2M226 10v2M230 10v2M240 10v2M6 12v2M21 12v2M25 12v2M33 12v2M38 12v2M40 12v2M42 12v2M63 12v2M92 12v2M99 12v2M116 12v2M117 12v2M122 12v2M123 12v2M126 12v2M134 12v2M160 12v2M177 12v2M180 12v2M185 12v2M186 12v2M187 12v2M197 12v2M204 12v2M208 12v2M210 12v2M224 12v2M233 12v2M236 12v2M242 12v2M247 12v2M254 12v2M1 14v2M6 14v2M7 14v2M9 14v2M13 14v2M16 14v2M17 14v2M20 14v2M21 14v2M25 14v2M29 14v2M35 14v2M36 14v2M55 14v2M60 14v2M71 14v2M72 14v2M77 14v2M78 14v2M82 14v2M101 14v2M116 14v2M130 14v2M142 14v2M150 14v2M151 14v2M156 14v2M162 14v2M173 14v2M176 14v2M185 14v2M191 14v2M193 14v2M198 14v2M221 14v2M230 14v2M232 14v2M245 14v2M250 14v2M252 14v2M0 16v2M9 16v2M18 16v2M34 16v2M39 16v2M42 16v2M50 16v2M61 16v2M68 16v2M74 16v2M91 16v2M92 16v2M97 16v2M99 16v2M109 16v2M112 16v2M113 16v2M115 16v2M116 16v2M124 16v2M140 16v2M146 16v2M149 16v2M150 16v2M158 16v2M169 16v2M205 16v2M215 16v2M219 16v2M233 16v2M246 16v2M255 16v2M3 18v2M28 18v2M41 18v2M54 18v2M72 18v2M73 18v2M83 18v2M86 18v2M91 18v2M96 18v2M117 18v2M119 18v2M123 18v2M124 18v2M125 18v2M130 18v2M147 18v2M149 18v2M160 18v2M162 18v2M163 18v2M167 18v2M168 18v2M170 18v2M173 18v2M183 18v2M184 18v2M186 18v2M187 18v2M213 18v2M216 18v2M241 18v2M245 18v2M247 18v2M16 20v2M23 20v2M26 20v2M39 20v2M58 20v2M72 20v2M73 20v2M74 20v2M76 20v2M78 20v2M83 20v2M90 20v2M99 20v2M110 20v2M115 20v2M119 20v2M124 20v2M132 20v2M146 20v2M148 20v2M155 20v2M157 20v2M167 20v2M176 20v2M177 20v2M182 20v2M183 20v2M196 20v2M201 20v2M218 20v2M220 20v2M226 20v2M232 20v2M236 20v2M239 20v2M240 20v2M246 20v2M0 22v2M8 22v2M17 22v2M20 22v2M37 22v2M46 22v2M52 22v2M68 22v2M71 22v2M73 22v2M98 22v2M115 22v2M124 22v2M125 22v2M144 22v2M167 22v2M182 22v2M185 22v2M207 22v2M209 22v2M221 22v2M226 22v2M233 22v2M244 22v2M246 22v2M36 24v2M54 24v2M56 24v2M74 24v2M78 24v2M79 24v2M103 24v2M106 24v2M121 24v2M125 24v2M142 24v2M144 24v2M172 24v2M182 24v2M196 24v2M197 24v2M209 24v2M210 24v2M211 24v2M214 24v2M218 24v2M229 24v2M244 24v2M3 26v2M4 26v2M16 26v2M20 26v2M65 26v2M69 26v2M70 26v2M78 26v2M80 26v2M83 26v2M90 26v2M96 26v2M102 26v2M105 26v2M117 26v2M118 26v2M121 26v2M130 26v2M133 26v2M138 26v2M139 26v2M152 26v2M160 26v2M164 26v2M168 26v2M172 26v2M190 26v2M197 26v2M207 26v2M244 26v2M253 26v2M0 28v2M1 28v2M19 28v2M20 28v2M25 28v2M30 28v2M33 28v2M50 28v2M62 28v2M73 28v2M122 28v2M128 28v2M139 28v2M140 28v2M148 28v2M153 28v2M155 28v2M166 28v2M171 28v2M178 28v2M182 28v2M192 28v2M199 28v2M205 28v2M221 28v2M224 28v2M228 28v2M236 28v2M238 28v2M249 28v2M253 28v2M254 28v2M255 28v2M6 30v2M19 30v2M27 30v2M42 30v2M43 30v2M44 30v2M47 30v2M54 30v2M68 30v2M72 30v2M76 30v2M100 30v2M113 30v2M128 30v2M130 30v2M132 30v2M134 30v2M152 30v2M165 30v2M168 30v2M173 30v2M179 30v2M191 30v2M199 30v2M202 30v2M207 30v2M220 30v2M230 30v2M231 30v2M237 30v2M251 30v2M2 32v2M10 32v2M14 32v2M17 32v2M29 32v2M33 32v2M47 32v2M53 32v2M56 32v2M58 32v2M71 32v2M81 32v2M83 32v2M94 32v2M95 32v2M104 32v2M116 32v2M127 32v2M141 32v2M151 32v2M156 32v2M161 32v2M167 32v2M168 32v2M172 32v2M173 32v2M175 32v2M180 32v2M182 32v2M188 32v2M192 32v2M199 32v2M213 32v2M215 32v2M216 32v2M228 32v2M235 32v2M240 32v2M242 32v2M243 32v2M245 32v2M250 32v2M5 34v2M12 34v2M13 34v2M14 34v2M31 34v2M47 34v2M49 34v2M74 34v2M98 34v2M100 34v2M102 34v2M103 34v2M112 34v2M113 34v2M117 34v2M122 34v2M126 34v2M130 34v2M140 34v2M143 34v2M147 34v2M148 34v2M151 34v2M157 34v2M159 34v2M161 34v2M185 34v2M189 34v2M209 34v2M213 34v2M218 34v2M222 34v2M226 34v2M227 34v2M228 34v2M244 34v2M249 34v2M252 34v2M9 36v2M15 36v2M16 36v2M19 36v2M35 36v2M39 36v2M44 36v2M61 36v2M69 36v2M103 36v2M111 36v2M114 36v2M128 36v2M135 36v2M158 36v2M162 36v2M167 36v2M169 36v2M173 36v2M174 36v2M175 36v2M186 36v2M192 36v2M193 36v2M202 36v2M224 36v2M230 36v2M244 36v2M247 36v2M249 36v2M2 38v2M3 38v2M7 38v2M35 38v2M37 38v2M38 38v2M41 38v2M50 38v2M57 38v2M77 38v2M83 38v2M86 38v2M94 38v2M104 38v2M105 38v2M107 38v2M113 38v2M114 38v2M137 38v2M140 38v2M143 38v2M144 38v2M149 38v2M156 38v2M164 38v2M172 38v2M173 38v2M178 38v2M182 38v2M190 38v2M199 38v2M200 38v2M202 38v2M207 38v2M209 38v2M210 38v2M212 38v2M228 38v2M232 38v2M237 38v2M244 38v2M0 40v2M29 40v2M35 40v2M38 40v2M44 40v2M45 40v2M46 40v2M47 40v2M53 40v2M55 40v2M67 40v2M68 40v2M70 40v2M77 40v2M80 40v2M81 40v2M91 40v2M98 40v2M99 40v2M102 40v2M104 40v2M112 40v2M116 40v2M118 40v2M119 40v2M120 40v2M123 40v2M126 40v2M134 40v2M151 40v2M153 40v2M156 40v2M159 40v2M162 40v2M163 40v2M164 40v2M169 40v2M172 40v2M205 40v2M213 40v2M216 40v2M239 40v2M252 40v2M253 40v2M3 42v2M13 42v2M28 42v2M37 42v2M43 42v2M46 42v2M48 42v2M58 42v2M68 42v2M71 42v2M75 42v2M76 42v2M81 42v2M101 42v2M119 42v2M122 42v2M128 42v2M136 42v2M145 42v2M166 42v2M168 42v2M170 42v2M178 42v2M181 42v2M185 42v2M190 42v2M191 42v2M195 42v2M196 42v2M215 42v2M218 42v2M221 42v2M223 42v2M225 42v2M236 42v2M239 42v2M252 42v2M3 44v2M7 44v2M33 44v2M34 44v2M36 44v2M43 44v2M46 44v2M54 44v2M57 44v2M67 44v2M72 44v2M97 44v2M100 44v2M103 44v2M105 44v2M126 44v2M128 44v2M129 44v2M132 44v2M139 44v2M149 44v2M152 44v2M171 44v2M181 44v2M186 44v2M196 44v2M199 44v2M203 44v2M219 44v2M225 44v2M242 44v2M247 44v2M249 44v2M251 44v2M254 44v2M255 44v2M8 46v2M17 46v2M18 46v2M24 46v2M39 46v2M45 46v2M65 46v2M72 46v2M99 46v2M105 46v2M113 46v2M114 46v2M138 46v2M139 46v2M140 46v2M146 46v2M153 46v2M158 46v2M160 46v2M161 46v2M162 46v2M177 46v2M187 46v2M199 46v2M227 46v2M232 46v2M248 46v2M9 48v2M25 48v2M30 48v2M42 48v2M46 48v2M54 48v2M62 48v2M66 48v2M75 48v2M77 48v2M85 48v2M136 48v2M142 48v2M155 48v2M166 48v2M173 48v2M192 48v2M196 48v2M197 48v2M198 48v2M203 48v2M211 48v2M226 48v2M237 48v2M251 48v2M0 50v2M3 50v2M28 50v2M42 50v2M44 50v2M45 50v2M48 50v2M76 50v2M78 50v2M82 50v2M86 50v2M96 50v2M110 50v2M117 50v2M131 50v2M134 50v2M145 50v2M154 50v2M155 50v2M169 50v2M179 50v2M184 50v2M185 50v2M190 50v2M195 50v2M199 50v2M203 50v2M213 50v2M223 50v2M234 50v2M235 50v2M246 50v2M3 52v2M4 52v2M13 52v2M14 52v2M19 52v2M28 52v2M29 52v2M31 52v2M48 52v2M52 52v2M64 52v2M65 52v2M72 52v2M74 52v2M116 52v2M123 52v2M127 52v2M128 52v2M131 52v2M142 52v2M153 52v2M154 52v2M159 52v2M167 52v2M181 52v2M185 52v2M199 52v2M210 52v2M214 52v2M220 52v2M225 52v2M227 52v2M238 52v2M243 52v2M247 52v2M0 54v2M6 54v2M7 54v2M15 54v2M36 54v2M38 54v2M42 54v2M60 54v2M61 54v2M81 54v2M100 54v2M102 54v2M103 54v2M125 54v2M129 54v2M130 54v2M134 54v2M138 54v2M151 54v2M163 54v2M166 54v2M180 54v2M184 54v2M188 54v2M199 54v2M203 54v2M204 54v2M212 54v2M217 54v2M218 54v2M221 54v2M233 54v2M234 54v2M238 54v2M244 54v2M250 54v2M0 56v2M9 56v2M10 56v2M15 56v2M16 56v2M34 56v2M37 56v2M52 56v2M55 56v2M81 56v2M86 56v2M88 56v2M89 56v2M91 56v2M118 56v2M123 56v2M125 56v2M131 56v2M135 56v2M139 56v2M145 56v2M167 56v2M172 56v2M175 56v2M177 56v2M179 56v2M191 56v2M230 56v2M236 56v2M253 56v2M2 58v2M8 58v2M10 58v2M18 58v2M21 58v2M34 58v2M36 58v2M37 58v2M57 58v2M70 58v2M77 58v2M93 58v2M97 58v2M98 58v2M104 58v2M106 58v2M111 58v2M121 58v2M128 58v2M133 58v2M139 58v2M154 58v2M158 58v2M160 58v2M161 58v2M163 58v2M170 58v2M181 58v2M185 58v2M192 58v2M210 58v2M219 58v2M225 58v2M231 58v2M237 58v2M239 58v2M245 58v2M255 58v2M9 60v2M23 60v2M25 60v2M50 60v2M63 60v2M84 60v2M101 60v2M132 60v2M140 60v2M143 60v2M150 60v2M151 60v2M176 60v2M187 60v2M204 60v2M205 60v2M212 60v2M216 60v2M234 60v2M240 60v2M21 62v2M25 62v2M46 62v2M61 62v2M70 62v2M74 62v2M102 62v2M104 62v2M110 62v2M125 62v2M132 62v2M135 62v2M137 62v2M150 62v2M156 62v2M157 62v2M162 62v2M173 62v2M186 62v2M190 62v2M200 62v2M206 62v2M209 62v2M212 62v2M214 62v2M229 62v2M235 62v2M238 62v2M247 62v2"/>
<path stroke="#434343" d="M0 0v2M6 0v2M12 0v2M16 0v2M22 0v2M31 0v2M35 0v2M55 0v2M58 0v2M73 0v2M74 0v2M79 0v2M83 0v2M85 0v2M90 0v2M95 0v2M117 0v2M134 0v2M142 0v2M146 0v2M147 0v2M149 0v2M153 0v2M155 0v2M170 0v2M176 0v2M177 0v2M178 0v2M180 0v2M188 0v2M192 0v2M193 0v2M207 0v2M222 0v2M239 0v2M251 0v2M255 0v2M2 2v2M5 2v2M9 2v2M13 2v2M19 2v2M24 2v2M36 2v2M43 2v2M44 2v2M48 2v2M56 2v2M59 2v2M68 2v2M76 2v2M77 2v2M99 2v2M105 2v2M109 2v2M112 2v2M119 2v2M120 2v2M125 2v2M126 2v2M139 2v2M143 2v2M150 2v2M154 2v2M174 2v2M179 2v2M184 2v2M205 2v2M212 2v2M215 2v2M217 2v2M218 2v2M221 2v2M230 2v2M239 2v2M242 2v2M5 4v2M7 4v2M9 4v2M32 4v2M44 4v2M54 4v2M57 4v2M63 4v2M67 4v2M73 4v2M74 4v2M79 4v2M95 4v2M105 4v2M109 4v2M110 4v2M111 4v2M128 4v2M142 4v2M151 4v2M154 4v2M166 4v2M170 4v2M183 4v2M190 4v2M221 4v2M234 4v2M9 6v2M10 6v2M29 6v2M30 6v2M32 6v2M34 6v2M45 6v2M58 6v2M65 6v2M68 6v2M90 6v2M91 6v2M110 6v2M113 6v2M116 6v2M120 6v2M147 6v2M155 6v2M157 6v2M162 6v2M165 6v2M182 6v2M184 6v2M187 6v2M188 6v2M197 6v2M205 6v2M207 6v2M210 6v2M212 6v2M222 6v2M225 6v2M226 6v2M232 6v2M236 6v2M239 6v2M247 6v2M253 6v2M255 6v2M4 8v2M10 8v2M13 8v2M26 8v2M28 8v2M29 8v2M30 8v2M45 8v2M64 8v2M68 8v2M82 8v2M103 8v2M112 8v2M117 8v2M119 8v2M123 8v2M127 8v2M129 8v2M132 8v2M135 8v2M136 8v2M157 8v2M160 8v2M178 8v2M183 8v2M189 8v2M196 8v2M199 8v2M214 8v2M215 8v2M227 8v2M234 8v2M1 10v2M3 10v2M7 10v2M8 10v2M10 10v2M17 10v2M19 10v2M25 10v2M30 10v2M34 10v2M37 10v2M64 10v2M67 10v2M94 10v2M97 10v2M103 10v2M109 10v2M110 10v2M120 10v2M123 10v2M128 10v2M129 10v2M130 10v2M131 10v2M139 10v2M144 10v2M151 10v2M163 10v2M170 10v2M176 10v2M177 10v2M187 10v2M199 10v2M211 10v2M212 10v2M216 10v2M225 10v2M229 10v2M242 10v2M254 10v2M4 12v2M9 12v2M22 12v2M24 12v2M26 12v2M28 12v2M41 12v2M49 12v2M50 12v2M51 12v2M57 12v2M69 12v2M71 12v2M79 12v2M96 12v2M111 12v2M120 12v2M121 12v2M124 12v2M130 12v2M137 12v2M143 12v2M144 12v2M148 12v2M154 12v2M166 12v2M167 12v2M171 12v2M190 12v2M191 12v2M193 12v2M194 12v2M195 12v2M198 12v2M200 12v2M218 12v2M222 12v2M223 12v2M238 12v2M241 12v2M244 12v2M249 12v2M0 14v2M3 14v2M18 14v2M27 14v2M44 14v2M49 14v2M52 14v2M83 14v2M95 14v2M97 14v2M102 14v2M104 14v2M111 14v2M115 14v2M119 14v2M128 14v2M134 14v2M147 14v2M157 14v2M181 14v2M189 14v2M196 14v2M199 14v2M204 14v2M206 14v2M213 14v2M219 14v2M226 14v2M240 14v2M241 14v2M254 14v2M7 16v2M21 16v2M27 16v2M28 16v2M30 16v2M46 16v2M60 16v2M73 16v2M86 16v2M88 16v2M107 16v2M119 16v2M123 16v2M125 16v2M135 16v2M154 16v2M156 16v2M162 16v2M167 16v2M187 16v2M201 16v2M207 16v2M209 16v2M212 16v2M218 16v2M251 16v2M252 16v2M9 18v2M18 18v2M19 18v2M20 18v2M31 18v2M40 18v2M44 18v2M49 18v2M51 18v2M64 18v2M77 18v2M90 18v2M99 18v2M121 18v2M131 18v2M135 18v2M138 18v2M152 18v2M155 18v2M158 18v2M164 18v2M188 18v2M191 18v2M197 18v2M205 18v2M207 18v2M210 18v2M224 18v2M231 18v2M236 18v2M238 18v2M243 18v2M254 18v2M6 20v2M28 20v2M41 20v2M43 20v2M46 20v2M52 20v2M57 20v2M59 20v2M67 20v2M87 20v2M89 20v2M97 20v2M103 20v2M113 20v2M130 20v2M141 20v2M164 20v2M181 20v2M192 20v2M202 20v2M203 20v2M210 20v2M221 20v2M237 20v2M244 20v2M249 20v2M250 20v2M4 22v2M6 22v2M9 22v2M21 22v2M22 22v2M28 22v2M29 22v2M30 22v2M32 22v2M58 22v2M62 22v2M84 22v2M86 22v2M99 22v2M104 22v2M117 22v2M127 22v2M128 22v2M132 22v2M138 22v2M146 22v2M148 22v2M155 22v2M156 22v2M160 22v2M161 22v2M163 22v2M164 22v2M168 22v2M173 22v2M174 22v2M210 22v2M216 22v2M218 22v2M223 22v2M229 22v2M230 22v2M242 22v2M255 22v2M9 24v2M12 24v2M13 24v2M24 24v2M25 24v2M35 24v2M46 24v2M47 24v2M59 24v2M64 24v2M69 24v2M72 24v2M87 24v2M95 24v2M101 24v2M107 24v2M124 24v2M133 24v2M147 24v2M153 24v2M167 24v2M185 24v2M186 24v2M190 24v2M193 24v2M212 24v2M219 24v2M222 24v2M234 24v2M238 24v2M239 24v2M243 24v2M255 24v2M5 26v2M8 26v2M11 26v2M12 26v2M21 26v2M26 26v2M47 26v2M52 26v2M62 26v2M73 26v2M84 26v2M89 26v2M114 26v2M116 26v2M124 26v2M127 26v2M145 26v2M157 26v2M176 26v2M177 26v2M183 26v2M184 26v2M198 26v2M216 26v2M219 26v2M220 26v2M222 26v2M246 26v2M247 26v2M7 28v2M14 28v2M35 28v2M53 28v2M64 28v2M68 28v2M70 28v2M71 28v2M78 28v2M86 28v2M89 28v2M90 28v2M92 28v2M104 28v2M106 28v2M107 28v2M108 28v2M110 28v2M111 28v2M115 28v2M116 28v2M121 28v2M129 28v2M133 28v2M137 28v2M152 28v2M157 28v2M158 28v2M169 28v2M170 28v2M177 28v2M190 28v2M195 28v2M197 28v2M210 28v2M211 28v2M212 28v2M214 28v2M218 28v2M219 28v2M226 28v2M235 28v2M242 28v2M243 28v2M244 28v2M8 30v2M11 30v2M15 30v2M17 30v2M20 30v2M26 30v2M33 30v2M34 30v2M37 30v2M40 30v2M41 30v2M49 30v2M59 30v2M75 30v2M78 30v2M81 30v2M101 30v2M109 30v2M120 30v2M127 30v2M144 30v2M145 30v2M148 30v2M156 30v2M166 30v2M176 30v2M184 30v2M188 30v2M193 30v2M204 30v2M206 30v2M209 30v2M210 30v2M216 30v2M234 30v2M243 30v2M247 30v2M3 32v2M8 32v2M9 32v2M30 32v2M40 32v2M42 32v2M54 32v2M68 32v2M79 32v2M82 32v2M87 32v2M93 32v2M96 32v2M99 32v2M106 32v2M111 32v2M117 32v2M119 32v2M135 32v2M136 32v2M160 32v2M164 32v2M174 32v2M177 32v2M187 32v2M189 32v2M194 32v2M198 32v2M201 32v2M202 32v2M209 32v2M220 32v2M224 32v2M229 32v2M230 32v2M251 32v2M252 32v2M1 34v2M18 34v2M20 34v2M23 34v2M24 34v2M25 34v2M27 34v2M35 34v2M46 34v2M54 34v2M57 34v2M60 34v2M62 34v2M65 34v2M69 34v2M80 34v2M106 34v2M111 34v2M136 34v2M144 34v2M163 34v2M164 34v2M170 34v2M173 34v2M177 34v2M178 34v2M187 34v2M188 34v2M207 34v2M212 34v2M232 34v2M236 34v2M246 34v2M251 34v2M1 36v2M22 36v2M23 36v2M25 36v2M28 36v2M34 36v2M42 36v2M49 36v2M52 36v2M64 36v2M66 36v2M68 36v2M71 36v2M72 36v2M78 36v2M113 36v2M116 36v2M129 36v2M142 36v2M145 36v2M159 36v2M168 36v2M181 36v2M182 36v2M190 36v2M191 36v2M198 36v2M199 36v2M200 36v2M206 36v2M231 36v2M233 36v2M235 36v2M236 36v2M237 36v2M245 36v2M15 38v2M19 38v2M30 38v2M33 38v2M70 38v2M88 38v2M100 38v2M126 38v2M132 38v2M142 38v2M152 38v2M162 38v2M169 38v2M174 38v2M180 38v2M192 38v2M226 38v2M227 38v2M229 38v2M231 38v2M1 40v2M2 40v2M4 40v2M12 40v2M17 40v2M25 40v2M36 40v2M41 40v2M54 40v2M61 40v2M103 40v2M106 40v2M124 40v2M137 40v2M154 40v2M182 40v2M183 40v2M185 40v2M191 40v2M197 40v2M198 40v2M200 40v2M206 40v2M208 40v2M209 40v2M215 40v2M220 40v2M230 40v2M234 40v2M240 40v2M249 40v2M250 40v2M254 40v2M0 42v2M5 42v2M15 42v2M19 42v2M23 42v2M24 42v2M25 42v2M27 42v2M38 42v2M41 42v2M51 42v2M57 42v2M62 42v2M64 42v2M65 42v2M69 42v2M72 42v2M74 42v2M84 42v2M89 42v2M97 42v2M99 42v2M104 42v2M109 42v2M111 42v2M112 42v2M114 42v2M138 42v2M188 42v2M209 42v2M230 42v2M241 42v2M243 42v2M0 44v2M1 44v2M15 44v2M19 44v2M25 44v2M26 44v2M32 44v2M35 44v2M39 44v2M49 44v2M53 44v2M55 44v2M58 44v2M78 44v2M89 44v2M107 44v2M127 44v2M135 44v2M145 44v2M153 44v2M165 44v2M172 44v2M175 44v2M179 44v2M182 44v2M187 44v2M188 44v2M190 44v2M194 44v2M202 44v2M206 44v2M217 44v2M227 44v2M230 44v2M231 44v2M232 44v2M233 44v2M237 44v2M240 44v2M252 44v2M1 46v2M9 46v2M13 46v2M25 46v2M29 46v2M48 46v2M53 46v2M62 46v2M66 46v2M69 46v2M77 46v2M80 46v2M91 46v2M107 46v2M124 46v2M125 46v2M127 46v2M129 46v2M133 46v2M144 46v2M151 46v2M164 46v2M165 46v2M171 46v2M175 46v2M176 46v2M203 46v2M204 46v2M211 46v2M214 46v2M221 46v2M231 46v2M239 46v2M3 48v2M8 48v2M10 48v2M14 48v2M16 48v2M36 48v2M48 48v2M49 48v2M59 48v2M76 48v2M80 48v2M81 48v2M82 48v2M88 48v2M89 48v2M100 48v2M103 48v2M111 48v2M120 48v2M121 48v2M125 48v2M141 48v2M144 48v2M148 48v2M156 48v2M159 48v2M163 48v2M176 48v2M177 48v2M179 48v2M185 48v2M191 48v2M194 48v2M207 48v2M217 48v2M223 48v2M227 48v2M234 48v2M252 48v2M253 48v2M1 50v2M15 50v2M21 50v2M23 50v2M33 50v2M43 50v2M51 50v2M53 50v2M57 50v2M61 50v2M67 50v2M69 50v2M74 50v2M87 50v2M101 50v2M112 50v2M121 50v2M130 50v2M147 50v2M149 50v2M157 50v2M171 50v2M173 50v2M174 50v2M176 50v2M178 50v2M180 50v2M192 50v2M198 50v2M201 50v2M206 50v2M207 50v2M217 50v2M219 50v2M222 50v2M225 50v2M247 50v2M1 52v2M5 52v2M20 52v2M21 52v2M23 52v2M32 52v2M34 52v2M45 52v2M54 52v2M56 52v2M78 52v2M87 52v2M98 52v2M105 52v2M106 52v2M109 52v2M112 52v2M126 52v2M129 52v2M134 52v2M135 52v2M136 52v2M144 52v2M147 52v2M148 52v2M150 52v2M171 52v2M174 52v2M183 52v2M190 52v2M192 52v2M201 52v2M208 52v2M254 52v2M2 54v2M19 54v2M27 54v2M30 54v2M48 54v2M49 54v2M64 54v2M70 54v2M71 54v2M107 54v2M110 54v2M112 54v2M113 54v2M114 54v2M121 54v2M139 54v2M148 54v2M170 54v2M172 54v2M176 54v2M179 54v2M185 54v2M209 54v2M213 54v2M216 54v2M225 54v2M229 54v2M231 54v2M236 54v2M249 54v2M12 56v2M19 56v2M30 56v2M45 56v2M63 56v2M68 56v2M69 56v2M70 56v2M72 56v2M73 56v2M74 56v2M92 56v2M98 56v2M106 56v2M132 56v2M141 56v2M147 56v2M154 56v2M161 56v2M192 56v2M195 56v2M200 56v2M208 56v2M243 56v2M251 56v2M254 56v2M11 58v2M12 58v2M27 58v2M28 58v2M30 58v2M38 58v2M46 58v2M48 58v2M50 58v2M60 58v2M65 58v2M73 58v2M80 58v2M88 58v2M96 58v2M102 58v2M107 58v2M117 58v2M120 58v2M130 58v2M138 58v2M141 58v2M147 58v2M175 58v2M177 58v2M180 58v2M187 58v2M188 58v2M189 58v2M205 58v2M211 58v2M229 58v2M238 58v2M242 58v2M244 58v2M250 58v2M2 60v2M16 60v2M27 60v2M30 60v2M32 60v2M53 60v2M54 60v2M58 60v2M61 60v2M75 60v2M83 60v2M92 60v2M93 60v2M95 60v2M103 60v2M122 60v2M129 60v2M131 60v2M137 60v2M139 60v2M148 60v2M156 60v2M160 60v2M167 60v2M177 60v2M180 60v2M192 60v2M200 60v2M202 60v2M207 60v2M209 60v2M231 60v2M236 60v2M237 60v2M248 60v2M250 60v2M252 60v2M11 62v2M19 62v2M29 62v2M32 62v2M35 62v2M42 62v2M44 62v2M47 62v2M67 62v2M71 62v2M85 62v2M101 62v2M106 62v2M112 62v2M122 62v2M124 62v2M138 62v2M142 62v2M151 62v2M161 62v2M179 62v2M198 62v2M208 62v2M217 62v2M225 62v2M227 62v2M236 62v2M245 62v2M253 62v2M254 62v2"/>
<path stroke="#4e4e4e" d="M3 0v2M14 0v2M18 0v2M19 0v2M20 0v2M42 0v2M53 0v2M61 0v2M72 0v2M84 0v2M88 0v2M106 0v2M107 0v2M115 0v2M128 0v2M129 0v2M138 0v2M139 0v2M151 0v2M152 0v2M161 0v2M165 0v2M181 0v2M199 0v2M204 0v2M218 0v2M223 0v2M230 0v2M253 0v2M10 2v2M16 2v2M21 2v2M22 2v2M27 2v2M35 2v2M52 2v2M54 2v2M66 2v2M69 2v2M78 2v2M82 2v2M86 2v2M97 2v2M128 2v2M138 2v2M145 2v2M148 2v2M155 2v2M157 2v2M165 2v2M175 2v2M186 2v2M190 2v2M193 2v2M196 2v2M201 2v2M208 2v2M233 2v2M237 2v2M240 2v2M246 2v2M251 2v2M6 4v2M10 4v2M31 4v2M35 4v2M37 4v2M41 4v2M42 4v2M48 4v2M49 4v2M75 4v2M84 4v2M88 4v2M90 4v2M113 4v2M117 4v2M130 4v2M150 4v2M172 4v2M175 4v2M193 4v2M204 4v2M206 4v2M211 4v2M222 4v2M226 4v2M236 4v2M249 4v2M50 6v2M59 6v2M60 6v2M62 6v2M64 6v2M70 6v2M84 6v2M121 6v2M123 6v2M131 6v2M136 6v2M148 6v2M152 6v2M163 6v2M170 6v2M174 6v2M179 6v2M192 6v2M211 6v2M218 6v2M221 6v2M229 6v2M238 6v2M245 6v2M5 8v2M8 8v2M22 8v2M25 8v2M35 8v2M36 8v2M39 8v2M44 8v2M48 8v2M51 8v2M61 8v2M66 8v2M69 8v2M84 8v2M87 8v2M95 8v2M107 8v2M125 8v2M131 8v2M142 8v2M146 8v2M148 8v2M158 8v2M165 8v2M181 8v2M185 8v2M186 8v2M188 8v2M193 8v2M203 8v2M213 8v2M217 8v2M223 8v2M230 8v2M240 8v2M253 8v2M6 10v2M29 10v2M32 10v2M33 10v2M35 10v2M54 10v2M58 10v2M69 10v2M74 10v2M76 10v2M82 10v2M98 10v2M106 10v2M111 10v2M114 10v2M116 10v2M147 10v2M149 10v2M164 10v2M192 10v2M213 10v2M220 10v2M233 10v2M236 10v2M244 10v2M245 10v2M248 10v2M252 10v2M255 10v2M5 12v2M14 12v2M18 12v2M32 12v2M35 12v2M37 12v2M43 12v2M44 12v2M52 12v2M59 12v2M65 12v2M68 12v2M73 12v2M77 12v2M78 12v2M82 12v2M93 12v2M119 12v2M125 12v2M127 12v2M128 12v2M132 12v2M135 12v2M146 12v2M149 12v2M152 12v2M153 12v2M157 12v2M158 12v2M161 12v2M172 12v2M192 12v2M199 12v2M209 12v2M216 12v2M217 12v2M228 12v2M235 12v2M239 12v2M248 12v2M253 12v2M5 14v2M33 14v2M41 14v2M46 14v2M70 14v2M80 14v2M92 14v2M98 14v2M109 14v2M122 14v2M129 14v2M135 14v2M143 14v2M144 14v2M163 14v2M165 14v2M168 14v2M171 14v2M177 14v2M188 14v2M197 14v2M202 14v2M214 14v2M220 14v2M222 14v2M224 14v2M228 14v2M24 16v2M44 16v2M45 16v2M55 16v2M58 16v2M69 16v2M95 16v2M105 16v2M106 16v2M108 16v2M110 16v2M139 16v2M142 16v2M160 16v2M165 16v2M166 16v2M173 16v2M174 16v2M182 16v2M183 16v2M193 16v2M195 16v2M224 16v2M232 16v2M235 16v2M237 16v2M244 16v2M249 16v2M8 18v2M11 18v2M35 18v2M39 18v2M63 18v2M68 18v2M80 18v2M81 18v2M87 18v2M89 18v2M94 18v2M97 18v2M109 18v2M110 18v2M115 18v2M139 18v2M153 18v2M189 18v2M194 18v2M195 18v2M212 18v2M226 18v2M229 18v2M235 18v2M252 18v2M1 20v2M3 20v2M20 20v2M25 20v2M27 20v2M45 20v2M47 20v2M54 20v2M61 20v2M65 20v2M77 20v2M80 20v2M85 20v2M95 20v2M105 20v2M114 20v2M116 20v2M117 20v2M120 20v2M127 20v2M139 20v2M144 20v2M154 20v2M163 20v2M190 20v2M199 20v2M213 20v2M214 20v2M223 20v2M254 20v2M12 22v2M19 22v2M27 22v2M34 22v2M36 22v2M40 22v2M57 22v2M63 22v2M81 22v2M85 22v2M100 22v2M101 22v2M102 22v2M112 22v2M120 22v2M121 22v2M141 22v2M149 22v2M165 22v2M179 22v2M183 22v2M193 22v2M204 22v2M208 22v2M219 22v2M224 22v2M228 22v2M243 22v2M0 24v2M1 24v2M2 24v2M14 24v2M15 24v2M19 24v2M27 24v2M29 24v2M30 24v2M34 24v2M38 24v2M39 24v2M42 24v2M45 24v2M48 24v2M50 24v2M63 24v2M66 24v2M73 24v2M92 24v2M97 24v2M113 24v2M114 24v2M116 24v2M129 24v2M134 24v2M136 24v2M156 24v2M159 24v2M169 24v2M178 24v2M180 24v2M188 24v2M198 24v2M208 24v2M228 24v2M233 24v2M237 24v2M245 24v2M246 24v2M248 24v2M252 24v2M2 26v2M9 26v2M18 26v2M28 26v2M30 26v2M32 26v2M34 26v2M38 26v2M50 26v2M72 26v2M77 26v2M87 26v2M91 26v2M97 26v2M99 26v2M100 26v2M112 26v2M119 26v2M123 26v2M136 26v2M141 26v2M143 26v2M150 26v2M155 26v2M170 26v2M171 26v2M187 26v2M200 26v2M204 26v2M210 26v2M214 26v2M218 26v2M18 28v2M28 28v2M37 28v2M48 28v2M51 28v2M55 28v2M61 28v2M63 28v2M75 28v2M76 28v2M80 28v2M94 28v2M99 28v2M102 28v2M109 28v2M117 28v2M134 28v2M145 28v2M147 28v2M151 28v2M159 28v2M163 28v2M168 28v2M174 28v2M175 28v2M176 28v2M180 28v2M183 28v2M187 28v2M189 28v2M196 28v2M203 28v2M213 28v2M220 28v2M227 28v2M10 30v2M14 30v2M24 30v2M50 30v2M66 30v2M71 30v2M82 30v2M131 30v2M141 30v2M155 30v2M160 30v2M164 30v2M169 30v2M182 30v2M194 30v2M203 30v2M212 30v2M213 30v2M223 30v2M229 30v2M233 30v2M239 30v2M244 30v2M249 30v2M18 32v2M25 32v2M26 32v2M37 32v2M44 32v2M55 32v2M66 32v2M73 32v2M77 32v2M80 32v2M84 32v2M92 32v2M100 32v2M109 32v2M112 32v2M144 32v2M149 32v2M155 32v2M157 32v2M163 32v2M170 32v2M183 32v2M190 32v2M191 32v2M195 32v2M210 32v2M214 32v2M221 32v2M233 32v2M236 32v2M237 32v2M241 32v2M244 32v2M253 32v2M7 34v2M21 34v2M34 34v2M43 34v2M51 34v2M66 34v2M70 34v2M72 34v2M76 34v2M77 34v2M92 34v2M94 34v2M96 34v2M101 34v2M107 34v2M109 34v2M118 34v2M119 34v2M129 34v2M154 34v2M155 34v2M158 34v2M162 34v2M174 34v2M181 34v2M186 34v2M193 34v2M205 34v2M206 34v2M214 34v2M225 34v2M239 34v2M247 34v2M250 34v2M8 36v2M12 36v2M21 36v2M43 36v2M45 36v2M50 36v2M60 36v2M65 36v2M67 36v2M89 36v2M100 36v2M120 36v2M121 36v2M123 36v2M140 36v2M143 36v2M146 36v2M161 36v2M164 36v2M176 36v2M177 36v2M178 36v2M179 36v2M185 36v2M204 36v2M210 36v2M216 36v2M223 36v2M238 36v2M248 36v2M255 36v2M8 38v2M29 38v2M31 38v2M34 38v2M44 38v2M52 38v2M67 38v2M79 38v2M91 38v2M92 38v2M95 38v2M103 38v2M106 38v2M111 38v2M112 38v2M119 38v2M121 38v2M148 38v2M157 38v2M187 38v2M188 38v2M191 38v2M195 38v2M206 38v2M208 38v2M250 38v2M253 38v2M5 40v2M15 40v2M16 40v2M24 40v2M26 40v2M34 40v2M49 40v2M51 40v2M64 40v2M88 40v2M90 40v2M111 40v2M121 40v2M125 40v2M128 40v2M132 40v2M140 40v2M149 40v2M152 40v2M170 40v2M188 40v2M192 40v2M195 40v2M221 40v2M228 40v2M233 40v2M242 40v2M2 42v2M16 42v2M39 42v2M42 42v2M45 42v2M77 42v2M106 42v2M110 42v2M115 42v2M126 42v2M147 42v2M165 42v2M169 42v2M174 42v2M177 42v2M180 42v2M183 42v2M199 42v2M208 42v2M210 42v2M217 42v2M235 42v2M238 42v2M245 42v2M250 42v2M254 42v2M5 44v2M8 44v2M11 44v2M18 44v2M20 44v2M22 44v2M27 44v2M37 44v2M44 44v2M47 44v2M61 44v2M63 44v2M80 44v2M88 44v2M92 44v2M106 44v2M110 44v2M131 44v2M138 44v2M141 44v2M159 44v2M161 44v2M183 44v2M184 44v2M229 44v2M236 44v2M239 44v2M248 44v2M4 46v2M6 46v2M12 46v2M14 46v2M26 46v2M37 46v2M42 46v2M44 46v2M52 46v2M59 46v2M74 46v2M84 46v2M86 46v2M88 46v2M92 46v2M104 46v2M109 46v2M112 46v2M121 46v2M142 46v2M155 46v2M156 46v2M157 46v2M170 46v2M178 46v2M188 46v2M192 46v2M196 46v2M208 46v2M233 46v2M253 46v2M255 46v2M12 48v2M15 48v2M27 48v2M28 48v2M37 48v2M41 48v2M55 48v2M57 48v2M69 48v2M87 48v2M97 48v2M102 48v2M112 48v2M122 48v2M139 48v2M149 48v2M151 48v2M153 48v2M169 48v2M171 48v2M183 48v2M184 48v2M189 48v2M193 48v2M202 48v2M205 48v2M206 48v2M222 48v2M235 48v2M243 48v2M250 48v2M4 50v2M8 50v2M11 50v2M13 50v2M20 50v2M29 50v2M32 50v2M50 50v2M54 50v2M64 50v2M73 50v2M83 50v2M90 50v2M104 50v2M119 50v2M135 50v2M138 50v2M143 50v2M163 50v2M165 50v2M182 50v2M188 50v2M189 50v2M215 50v2M232 50v2M237 50v2M10 52v2M16 52v2M27 52v2M30 52v2M36 52v2M60 52v2M66 52v2M73 52v2M89 52v2M91 52v2M111 52v2M117 52v2M137 52v2M139 52v2M141 52v2M162 52v2M165 52v2M170 52v2M173 52v2M186 52v2M189 52v2M193 52v2M195 52v2M198 52v2M200 52v2M203 52v2M218 52v2M222 52v2M223 52v2M230 52v2M233 52v2M241 52v2M242 52v2M245 52v2M249 52v2M9 54v2M32 54v2M47 54v2M57 54v2M68 54v2M74 54v2M82 54v2M93 54v2M105 54v2M123 54v2M140 54v2M155 54v2M165 54v2M169 54v2M173 54v2M177 54v2M187 54v2M191 54v2M193 54v2M201 54v2M208 54v2M248 54v2M14 56v2M18 56v2M21 56v2M33 56v2M36 56v2M79 56v2M104 56v2M105 56v2M107 56v2M108 56v2M127 56v2M130 56v2M143 56v2M144 56v2M163 56v2M165 56v2M166 56v2M168 56v2M180 56v2M181 56v2M188 56v2M197 56v2M198 56v2M212 56v2M213 56v2M216 56v2M229 56v2M242 56v2M249 56v2M3 58v2M19 58v2M26 58v2M35 58v2M43 58v2M44 58v2M47 58v2M62 58v2M63 58v2M67 58v2M71 58v2M75 58v2M78 58v2M82 58v2M85 58v2M87 58v2M100 58v2M101 58v2M115 58v2M116 58v2M119 58v2M129 58v2M132 58v2M156 58v2M162 58v2M165 58v2M167 58v2M193 58v2M198 58v2M222 58v2M233 58v2M251 58v2M252 58v2M254 58v2M1 60v2M18 60v2M55 60v2M66 60v2M79 60v2M80 60v2M102 60v2M105 60v2M107 60v2M119 60v2M124 60v2M126 60v2M133 60v2M153 60v2M155 60v2M171 60v2M182 60v2M195 60v2M198 60v2M233 60v2M235 60v2M241 60v2M249 60v2M16 62v2M18 62v2M22 62v2M54 62v2M63 62v2M65 62v2M68 62v2M78 62v2M81 62v2M119 62v2M123 62v2M141 62v2M145 62v2M152 62v2M160 62v2M169 62v2M170 62v2M178 62v2M210 62v2M213 62v2M218 62v2M224 62v2M230 62v2M233 62v2"/>
<path stroke="#595959" d="M5 0v2M11 0v2M17 0v2M43 0v2M46 0v2M52 0v2M63 0v2M96 0v2M97 0v2M110 0v2M111 0v2M120 0v2M130 0v2M137 0v2M145 0v2M169 0v2M183 0v2M200 0v2M202 0v2M18 2v2M50 2v2M62 2v2M72 2v2M94 2v2M110 2v2M111 2v2M131 2v2M144 2v2M146 2v2M152 2v2M156 2v2M160 2v2M169 2v2M181 2v2M183 2v2M197 2v2M204 2v2M227 2v2M228 2v2M229 2v2M234 2v2M236 2v2M250 2v2M43 4v2M58 4v2M60 4v2M89 4v2M108 4v2M121 4v2M122 4v2M125 4v2M132 4v2M133 4v2M138 4v2M141 4v2M146 4v2M148 4v2M156 4v2M157 4v2M161 4v2M174 4v2M177 4v2M184 4v2M186 4v2M213 4v2M218 4v2M231 4v2M16 6v2M21 6v2M24 6v2M44 6v2M53 6v2M93 6v2M94 6v2M95 6v2M114 6v2M115 6v2M118 6v2M122 6v2M124 6v2M132 6v2M141 6v2M154 6v2M172 6v2M177 6v2M181 6v2M190 6v2M193 6v2M206 6v2M234 6v2M55 8v2M56 8v2M150 8v2M159 8v2M167 8v2M168 8v2M174 8v2M192 8v2M208 8v2M220 8v2M222 8v2M239 8v2M243 8v2M247 8v2M250 8v2M254 8v2M22 10v2M27 10v2M28 10v2M47 10v2M50 10v2M61 10v2M72 10v2M85 10v2M87 10v2M141 10v2M143 10v2M153 10v2M156 10v2M158 10v2M190 10v2M201 10v2M228 10v2M232 10v2M237 10v2M10 12v2M13 12v2M15 12v2M17 12v2M39 12v2M47 12v2M48 12v2M58 12v2M74 12v2M87 12v2M110 12v2M113 12v2M139 12v2M169 12v2M173 12v2M212 12v2M213 12v2M230 12v2M231 12v2M237 12v2M255 12v2M10 14v2M24 14v2M59 14v2M64 14v2M87 14v2M88 14v2M117 14v2M118 14v2M146 14v2M200 14v2M205 14v2M210 14v2M231 14v2M233 14v2M234 14v2M246 14v2M3 16v2M5 16v2M13 16v2M15 16v2M20 16v2M33 16v2M51 16v2M52 16v2M59 16v2M64 16v2M70 16v2M80 16v2M81 16v2M94 16v2M96 16v2M98 16v2M121 16v2M129 16v2M137 16v2M152 16v2M164 16v2M172 16v2M194 16v2M200 16v2M202 16v2M203 16v2M211 16v2M242 16v2M5 18v2M15 18v2M21 18v2M24 18v2M47 18v2M50 18v2M52 18v2M53 18v2M57 18v2M71 18v2M74 18v2M95 18v2M104 18v2M116 18v2M122 18v2M133 18v2M146 18v2M148 18v2M161 18v2M185 18v2M203 18v2M206 18v2M220 18v2M222 18v2M233 18v2M237 18v2M255 18v2M0 20v2M5 20v2M18 20v2M44 20v2M60 20v2M75 20v2M79 20v2M86 20v2M123 20v2M145 20v2M159 20v2M169 20v2M179 20v2M204 20v2M206 20v2M212 20v2M233 20v2M238 20v2M241 20v2M252 20v2M11 22v2M14 22v2M16 22v2M25 22v2M44 22v2M59 22v2M60 22v2M67 22v2M72 22v2M79 22v2M88 22v2M90 22v2M107 22v2M109 22v2M111 22v2M116 22v2M129 22v2M133 22v2M140 22v2M150 22v2M151 22v2M152 22v2M158 22v2M170 22v2M200 22v2M203 22v2M212 22v2M215 22v2M217 22v2M251 22v2M5 24v2M17 24v2M18 24v2M21 24v2M33 24v2M43 24v2M77 24v2M80 24v2M83 24v2M94 24v2M119 24v2M138 24v2M152 24v2M164 24v2M203 24v2M206 24v2M226 24v2M250 24v2M0 26v2M1 26v2M19 26v2M33 26v2M42 26v2M53 26v2M67 26v2M93 26v2M104 26v2M110 26v2M120 26v2M126 26v2M147 26v2M151 26v2M158 26v2M161 26v2M169 26v2M189 26v2M208 26v2M217 26v2M232 26v2M234 26v2M236 26v2M23 28v2M26 28v2M29 28v2M36 28v2M38 28v2M39 28v2M42 28v2M44 28v2M49 28v2M54 28v2M67 28v2M72 28v2M74 28v2M85 28v2M87 28v2M124 28v2M131 28v2M146 28v2M184 28v2M194 28v2M208 28v2M225 28v2M233 28v2M248 28v2M1 30v2M3 30v2M30 30v2M46 30v2M48 30v2M51 30v2M58 30v2M60 30v2M64 30v2M73 30v2M87 30v2M89 30v2M93 30v2M97 30v2M98 30v2M99 30v2M114 30v2M117 30v2M122 30v2M125 30v2M136 30v2M140 30v2M153 30v2M157 30v2M163 30v2M196 30v2M208 30v2M219 30v2M224 30v2M227 30v2M255 30v2M0 32v2M11 32v2M24 32v2M34 32v2M52 32v2M72 32v2M78 32v2M86 32v2M90 32v2M113 32v2M131 32v2M133 32v2M139 32v2M147 32v2M148 32v2M152 32v2M158 32v2M159 32v2M178 32v2M222 32v2M234 32v2M247 32v2M249 32v2M255 32v2M0 34v2M15 34v2M38 34v2M44 34v2M87 34v2M125 34v2M135 34v2M142 34v2M165 34v2M167 34v2M184 34v2M192 34v2M197 34v2M210 34v2M217 34v2M220 34v2M231 34v2M234 34v2M245 34v2M3 36v2M13 36v2M14 36v2M26 36v2M36 36v2M37 36v2M51 36v2M55 36v2M62 36v2M74 36v2M77 36v2M87 36v2M88 36v2M97 36v2M101 36v2M112 36v2M115 36v2M119 36v2M130 36v2M134 36v2M136 36v2M156 36v2M166 36v2M217 36v2M227 36v2M240 36v2M0 38v2M1 38v2M10 38v2M16 38v2M25 38v2M40 38v2M43 38v2M47 38v2M65 38v2M82 38v2M84 38v2M96 38v2M110 38v2M123 38v2M127 38v2M128 38v2M139 38v2M161 38v2M179 38v2M183 38v2M186 38v2M205 38v2M211 38v2M234 38v2M239 38v2M243 38v2M251 38v2M252 38v2M255 38v2M11 40v2M21 40v2M22 40v2M27 40v2M57 40v2M83 40v2M94 40v2M109 40v2M110 40v2M117 40v2M142 40v2M148 40v2M150 40v2M177 40v2M190 40v2M207 40v2M236 40v2M241 40v2M244 40v2M247 40v2M255 40v2M17 42v2M18 42v2M30 42v2M36 42v2M47 42v2M53 42v2M54 42v2M66 42v2M86 42v2M88 42v2M107 42v2M117 42v2M127 42v2M131 42v2M142 42v2M149 42v2M173 42v2M182 42v2M213 42v2M214 42v2M227 42v2M232 42v2M244 42v2M246 42v2M248 42v2M251 42v2M253 42v2M24 44v2M28 44v2M65 44v2M74 44v2M82 44v2M86 44v2M87 44v2M98 44v2M104 44v2M111 44v2M118 44v2M124 44v2M125 44v2M136 44v2M137 44v2M142 44v2M150 44v2M163 44v2M178 44v2M185 44v2M201 44v2M205 44v2M211 44v2M218 44v2M238 44v2M245 44v2M3 46v2M28 46v2M51 46v2M54 46v2M56 46v2M58 46v2M63 46v2M96 46v2M100 46v2M103 46v2M106 46v2M110 46v2M117 46v2M132 46v2M135 46v2M149 46v2M154 46v2M159 46v2M168 46v2M183 46v2M184 46v2M190 46v2M205 46v2M209 46v2M215 46v2M216 46v2M220 46v2M228 46v2M235 46v2M241 46v2M249 46v2M5 48v2M20 48v2M33 48v2M35 48v2M58 48v2M71 48v2M99 48v2M108 48v2M109 48v2M117 48v2M124 48v2M147 48v2M150 48v2M158 48v2M164 48v2M200 48v2M228 48v2M244 48v2M245 48v2M5 50v2M10 50v2M12 50v2M19 50v2M22 50v2M24 50v2M25 50v2M34 50v2M36 50v2M39 50v2M47 50v2M58 50v2M72 50v2M106 50v2M108 50v2M109 50v2M115 50v2M127 50v2M129 50v2M132 50v2M137 50v2M153 50v2M170 50v2M191 50v2M193 50v2M208 50v2M216 50v2M218 50v2M226 50v2M242 50v2M244 50v2M250 50v2M7 52v2M11 52v2M26 52v2M33 52v2M38 52v2M42 52v2M80 52v2M99 52v2M132 52v2M138 52v2M145 52v2M151 52v2M158 52v2M161 52v2M180 52v2M209 52v2M211 52v2M239 52v2M244 52v2M251 52v2M253 52v2M16 54v2M22 54v2M44 54v2M51 54v2M52 54v2M67 54v2M80 54v2M85 54v2M86 54v2M89 54v2M92 54v2M95 54v2M99 54v2M101 54v2M117 54v2M118 54v2M120 54v2M126 54v2M131 54v2M149 54v2M153 54v2M157 54v2M167 54v2M189 54v2M196 54v2M197 54v2M219 54v2M241 54v2M251 54v2M254 54v2M255 54v2M1 56v2M7 56v2M13 56v2M20 56v2M29 56v2M31 56v2M39 56v2M58 56v2M60 56v2M65 56v2M85 56v2M97 56v2M115 56v2M116 56v2M120 56v2M138 56v2M142 56v2M156 56v2M158 56v2M164 56v2M186 56v2M196 56v2M199 56v2M209 56v2M211 56v2M231 56v2M241 56v2M25 58v2M41 58v2M49 58v2M55 58v2M74 58v2M84 58v2M90 58v2M99 58v2M105 58v2M108 58v2M134 58v2M137 58v2M140 58v2M143 58v2M145 58v2M148 58v2M149 58v2M157 58v2M164 58v2M173 58v2M183 58v2M191 58v2M194 58v2M215 58v2M230 58v2M236 58v2M247 58v2M248 58v2M253 58v2M10 60v2M11 60v2M12 60v2M14 60v2M31 60v2M41 60v2M45 60v2M49 60v2M62 60v2M64 60v2M82 60v2M85 60v2M87 60v2M91 60v2M98 60v2M115 60v2M134 60v2M141 60v2M154 60v2M179 60v2M190 60v2M218 60v2M222 60v2M0 62v2M2 62v2M27 62v2M34 62v2M52 62v2M56 62v2M58 62v2M66 62v2M73 62v2M87 62v2M90 62v2M95 62v2M99 62v2M117 62v2M131 62v2M147 62v2M167 62v2M175 62v2M188 62v2M191 62v2M205 62v2M215 62v2M219 62v2M246 62v2M248 62v2M249 62v2M250 62v2M255 62v2"/>
<path stroke="#646464" d="M26 0v2M27 0v2M36 0v2M44 0v2M45 0v2M47 0v2M54 0v2M82 0v2M92 0v2M100 0v2M144 0v2M211 0v2M224 0v2M233 0v2M243 0v2M38 2v2M47 2v2M60 2v2M64 2v2M100 2v2M124 2v2M133 2v2M167 2v2M182 2v2M194 2v2M224 2v2M47 4v2M50 4v2M94 4v2M114 4v2M145 4v2M155 4v2M160 4v2M168 4v2M179 4v2M203 4v2M205 4v2M214 4v2M229 4v2M232 4v2M242 4v2M245 4v2M253 4v2M25 6v2M26 6v2M66 6v2M73 6v2M82 6v2M126 6v2M161 6v2M208 6v2M224 6v2M244 6v2M252 6v2M3 8v2M27 8v2M33 8v2M40 8v2M53 8v2M54 8v2M76 8v2M101 8v2M104 8v2M141 8v2M155 8v2M164 8v2M205 8v2M209 8v2M221 8v2M225 8v2M231 8v2M246 8v2M12 10v2M16 10v2M51 10v2M59 10v2M68 10v2M75 10v2M122 10v2M136 10v2M160 10v2M161 10v2M184 10v2M188 10v2M204 10v2M205 10v2M224 10v2M234 10v2M253 10v2M0 12v2M7 12v2M20 12v2M27 12v2M54 12v2M60 12v2M88 12v2M94 12v2M102 12v2M104 12v2M141 12v2M179 12v2M206 12v2M232 12v2M243 12v2M252 12v2M2 14v2M48 14v2M54 14v2M58 14v2M61 14v2M85 14v2M94 14v2M127 14v2M167 14v2M187 14v2M215 14v2M227 14v2M236 14v2M243 14v2M244 14v2M247 14v2M10 16v2M12 16v2M25 16v2M32 16v2M36 16v2M48 16v2M62 16v2M67 16v2M104 16v2M111 16v2M114 16v2M153 16v2M155 16v2M184 16v2M197 16v2M208 16v2M223 16v2M225 16v2M239 16v2M250 16v2M10 18v2M27 18v2M32 18v2M60 18v2M61 18v2M66 18v2M75 18v2M106 18v2M112 18v2M140 18v2M143 18v2M150 18v2M154 18v2M172 18v2M192 18v2M202 18v2M225 18v2M230 18v2M253 18v2M11 20v2M14 20v2M22 20v2M33 20v2M37 20v2M42 20v2M49 20v2M122 20v2M131 20v2M134 20v2M180 20v2M187 20v2M189 20v2M193 20v2M216 20v2M217 20v2M248 20v2M253 20v2M2 22v2M3 22v2M54 22v2M80 22v2M89 22v2M103 22v2M136 22v2M143 22v2M166 22v2M176 22v2M177 22v2M192 22v2M195 22v2M199 22v2M214 22v2M237 22v2M247 22v2M3 24v2M32 24v2M44 24v2M62 24v2M71 24v2M93 24v2M127 24v2M132 24v2M135 24v2M150 24v2M176 24v2M179 24v2M215 24v2M227 24v2M7 26v2M43 26v2M48 26v2M49 26v2M51 26v2M55 26v2M66 26v2M86 26v2M107 26v2M163 26v2M173 26v2M196 26v2M206 26v2M209 26v2M211 26v2M227 26v2M229 26v2M231 26v2M241 26v2M243 26v2M245 26v2M248 26v2M252 26v2M120 28v2M127 28v2M138 28v2M165 28v2M181 28v2M188 28v2M201 28v2M204 28v2M207 28v2M234 28v2M252 28v2M12 30v2M67 30v2M105 30v2M115 30v2M138 30v2M146 30v2M149 30v2M150 30v2M161 30v2M190 30v2M250 30v2M5 32v2M12 32v2M21 32v2M32 32v2M57 32v2M63 32v2M65 32v2M88 32v2M89 32v2M98 32v2M125 32v2M143 32v2M154 32v2M185 32v2M203 32v2M206 32v2M207 32v2M217 32v2M218 32v2M8 34v2M59 34v2M68 34v2M75 34v2M78 34v2M81 34v2M99 34v2M104 34v2M137 34v2M139 34v2M145 34v2M150 34v2M172 34v2M196 34v2M221 34v2M241 34v2M253 34v2M31 36v2M70 36v2M76 36v2M117 36v2M132 36v2M154 36v2M155 36v2M165 36v2M187 36v2M195 36v2M239 36v2M242 36v2M243 36v2M5 38v2M9 38v2M14 38v2M23 38v2M32 38v2M49 38v2M55 38v2M59 38v2M64 38v2M68 38v2M78 38v2M87 38v2M117 38v2M133 38v2M134 38v2M138 38v2M153 38v2M155 38v2M159 38v2M163 38v2M181 38v2M214 38v2M222 38v2M242 38v2M18 40v2M42 40v2M50 40v2M65 40v2M85 40v2M89 40v2M100 40v2M115 40v2M135 40v2M161 40v2M166 40v2M168 40v2M211 40v2M224 40v2M237 40v2M245 40v2M9 42v2M10 42v2M21 42v2M26 42v2M32 42v2M52 42v2M80 42v2M94 42v2M120 42v2M129 42v2M139 42v2M141 42v2M157 42v2M160 42v2M164 42v2M184 42v2M198 42v2M204 42v2M207 42v2M9 44v2M13 44v2M14 44v2M41 44v2M45 44v2M62 44v2M71 44v2M120 44v2M130 44v2M147 44v2M148 44v2M158 44v2M167 44v2M177 44v2M207 44v2M216 44v2M223 44v2M55 46v2M81 46v2M90 46v2M94 46v2M118 46v2M163 46v2M166 46v2M174 46v2M193 46v2M197 46v2M212 46v2M229 46v2M237 46v2M242 46v2M247 46v2M4 48v2M65 48v2M74 48v2M90 48v2M96 48v2M115 48v2M119 48v2M131 48v2M134 48v2M157 48v2M165 48v2M167 48v2M208 48v2M218 48v2M232 48v2M239 48v2M248 48v2M254 48v2M2 50v2M6 50v2M18 50v2M55 50v2M70 50v2M88 50v2M89 50v2M100 50v2M111 50v2M124 50v2M128 50v2M158 50v2M159 50v2M160 50v2M168 50v2M197 50v2M210 50v2M228 50v2M233 50v2M253 50v2M2 52v2M12 52v2M25 52v2M51 52v2M85 52v2M86 52v2M101 52v2M108 52v2M115 52v2M133 52v2M143 52v2M164 52v2M179 52v2M205 52v2M219 52v2M234 52v2M236 52v2M5 54v2M11 54v2M25 54v2M28 54v2M55 54v2M63 54v2M65 54v2M76 54v2M109 54v2M111 54v2M128 54v2M132 54v2M137 54v2M145 54v2M146 54v2M174 54v2M182 54v2M192 54v2M202 54v2M214 54v2M224 54v2M227 54v2M237 54v2M6 56v2M17 56v2M35 56v2M42 56v2M43 56v2M46 56v2M47 56v2M96 56v2M110 56v2M119 56v2M136 56v2M137 56v2M146 56v2M155 56v2M171 56v2M173 56v2M176 56v2M207 56v2M214 56v2M220 56v2M234 56v2M237 56v2M239 56v2M248 56v2M32 58v2M52 58v2M69 58v2M81 58v2M113 58v2M123 58v2M125 58v2M135 58v2M169 58v2M171 58v2M203 58v2M218 58v2M5 60v2M37 60v2M47 60v2M52 60v2M72 60v2M110 60v2M112 60v2M123 60v2M142 60v2M157 60v2M159 60v2M161 60v2M169 60v2M172 60v2M201 60v2M208 60v2M251 60v2M1 62v2M5 62v2M6 62v2M82 62v2M83 62v2M86 62v2M109 62v2M139 62v2M149 62v2M154 62v2M171 62v2M174 62v2M195 62v2M239 62v2"/>
<path stroke="#6f6f6f" d="M25 0v2M62 0v2M64 0v2M94 0v2M99 0v2M104 0v2M119 0v2M191 0v2M210 0v2M217 0v2M28 2v2M39 2v2M42 2v2M53 2v2M88 2v2M116 2v2M172 2v2M173 2v2M192 2v2M206 2v2M209 2v2M12 4v2M19 4v2M64 4v2M70 4v2M85 4v2M86 4v2M87 4v2M101 4v2M124 4v2M129 4v2M139 4v2M147 4v2M194 4v2M233 4v2M237 4v2M0 6v2M52 6v2M72 6v2M87 6v2M89 6v2M108 6v2M109 6v2M138 6v2M145 6v2M156 6v2M159 6v2M160 6v2M198 6v2M213 6v2M242 6v2M20 8v2M49 8v2M80 8v2M86 8v2M90 8v2M120 8v2M134 8v2M139 8v2M173 8v2M198 8v2M218 8v2M224 8v2M226 8v2M4 10v2M14 10v2M42 10v2M49 10v2M55 10v2M121 10v2M125 10v2M185 10v2M191 10v2M16 12v2M36 12v2M45 12v2M72 12v2M83 12v2M105 12v2M106 12v2M109 12v2M145 12v2M170 12v2M175 12v2M196 12v2M203 12v2M11 14v2M19 14v2M53 14v2M66 14v2M110 14v2M125 14v2M132 14v2M158 14v2M161 14v2M175 14v2M192 14v2M203 14v2M208 14v2M212 14v2M242 14v2M37 16v2M41 16v2M78 16v2M117 16v2M134 16v2M138 16v2M147 16v2M148 16v2M163 16v2M179 16v2M192 16v2M206 16v2M229 16v2M241 16v2M6 18v2M26 18v2M30 18v2M45 18v2M103 18v2M120 18v2M128 18v2M134 18v2M159 18v2M177 18v2M193 18v2M201 18v2M218 18v2M234 18v2M7 20v2M53 20v2M93 20v2M121 20v2M142 20v2M153 20v2M165 20v2M173 20v2M195 20v2M207 20v2M243 20v2M5 22v2M13 22v2M18 22v2M33 22v2M42 22v2M47 22v2M51 22v2M94 22v2M131 22v2M159 22v2M186 22v2M189 22v2M197 22v2M202 22v2M211 22v2M231 22v2M241 22v2M250 22v2M65 24v2M104 24v2M109 24v2M139 24v2M143 24v2M161 24v2M171 24v2M173 24v2M192 24v2M205 24v2M217 24v2M10 26v2M56 26v2M61 26v2M79 26v2M94 26v2M125 26v2M135 26v2M174 26v2M179 26v2M195 26v2M225 26v2M235 26v2M249 26v2M16 28v2M21 28v2M59 28v2M69 28v2M84 28v2M136 28v2M141 28v2M193 28v2M209 28v2M222 28v2M230 28v2M240 28v2M250 28v2M13 30v2M52 30v2M53 30v2M55 30v2M70 30v2M95 30v2M102 30v2M123 30v2M124 30v2M133 30v2M142 30v2M159 30v2M175 30v2M218 30v2M225 30v2M236 30v2M248 30v2M13 32v2M19 32v2M28 32v2M41 32v2M43 32v2M45 32v2M60 32v2M74 32v2M85 32v2M102 32v2M103 32v2M226 32v2M238 32v2M9 34v2M30 34v2M40 34v2M41 34v2M48 34v2M73 34v2M83 34v2M114 34v2M120 34v2M133 34v2M168 34v2M169 34v2M191 34v2M203 34v2M204 34v2M230 34v2M238 34v2M0 36v2M5 36v2M6 36v2M7 36v2M18 36v2M24 36v2M29 36v2M38 36v2M53 36v2M85 36v2M105 36v2M109 36v2M133 36v2M203 36v2M215 36v2M221 36v2M232 36v2M254 36v2M27 38v2M28 38v2M76 38v2M115 38v2M120 38v2M176 38v2M197 38v2M10 40v2M23 40v2M63 40v2M79 40v2M113 40v2M138 40v2M139 40v2M141 40v2M147 40v2M167 40v2M179 40v2M189 40v2M218 40v2M248 40v2M29 42v2M31 42v2M90 42v2M100 42v2M103 42v2M118 42v2M134 42v2M158 42v2M163 42v2M176 42v2M211 42v2M231 42v2M234 42v2M21 44v2M50 44v2M75 44v2M85 44v2M91 44v2M96 44v2M102 44v2M113 44v2M155 44v2M224 44v2M2 46v2M11 46v2M15 46v2M30 46v2M34 46v2M41 46v2M101 46v2M126 46v2M182 46v2M185 46v2M217 46v2M244 46v2M252 46v2M2 48v2M31 48v2M38 48v2M73 48v2M98 48v2M105 48v2M160 48v2M162 48v2M170 48v2M190 48v2M195 48v2M214 48v2M230 48v2M231 48v2M236 48v2M241 48v2M246 48v2M255 48v2M75 50v2M84 50v2M92 50v2M94 50v2M107 50v2M140 50v2M167 50v2M251 50v2M0 52v2M18 52v2M35 52v2M55 52v2M100 52v2M110 52v2M172 52v2M197 52v2M240 52v2M248 52v2M250 52v2M10 54v2M58 54v2M62 54v2M72 54v2M90 54v2M119 54v2M154 54v2M171 54v2M247 54v2M2 56v2M28 56v2M49 56v2M57 56v2M76 56v2M112 56v2M113 56v2M128 56v2M149 56v2M153 56v2M205 56v2M218 56v2M222 56v2M232 56v2M233 56v2M6 58v2M7 58v2M15 58v2M16 58v2M23 58v2M33 58v2M40 58v2M95 58v2M136 58v2M150 58v2M153 58v2M174 58v2M182 58v2M206 58v2M207 58v2M227 58v2M20 60v2M29 60v2M60 60v2M67 60v2M68 60v2M70 60v2M94 60v2M109 60v2M113 60v2M130 60v2M197 60v2M225 60v2M244 60v2M246 60v2M3 62v2M13 62v2M15 62v2M45 62v2M51 62v2M91 62v2M134 62v2M148 62v2M158 62v2M183 62v2M192 62v2M197 62v2"/>
<path stroke="#7a7a7a" d="M32 0v2M101 0v2M121 0v2M127 0v2M148 0v2M168 0v2M172 0v2M197 0v2M0 2v2M26 2v2M57 2v2M58 2v2M74 2v2M132 2v2M147 2v2M177 2v2M180 2v2M210 2v2M214 2v2M26 4v2M103 4v2M106 4v2M182 4v2M195 4v2M202 4v2M215 4v2M225 4v2M251 4v2M15 6v2M37 6v2M85 6v2M88 6v2M139 6v2M158 6v2M204 6v2M215 6v2M227 6v2M249 6v2M18 8v2M46 8v2M111 8v2M121 8v2M126 8v2M138 8v2M145 8v2M154 8v2M197 8v2M9 10v2M11 10v2M26 10v2M46 10v2M93 10v2M108 10v2M112 10v2M155 10v2M173 10v2M203 10v2M243 10v2M30 12v2M80 12v2M90 12v2M183 12v2M188 12v2M201 12v2M234 12v2M26 14v2M32 14v2M42 14v2M56 14v2M68 14v2M99 14v2M113 14v2M120 14v2M133 14v2M141 14v2M148 14v2M149 14v2M155 14v2M211 14v2M216 14v2M248 14v2M249 14v2M23 16v2M29 16v2M31 16v2M49 16v2M54 16v2M126 16v2M151 16v2M176 16v2M16 18v2M25 18v2M43 18v2M82 18v2M129 18v2M199 18v2M239 18v2M251 18v2M31 20v2M32 20v2M48 20v2M82 20v2M100 20v2M125 20v2M135 20v2M227 20v2M230 20v2M231 20v2M26 22v2M49 22v2M65 22v2M110 22v2M135 22v2M157 22v2M196 22v2M198 22v2M222 22v2M227 22v2M235 22v2M236 22v2M239 22v2M49 24v2M86 24v2M112 24v2M145 24v2M148 24v2M155 24v2M191 24v2M236 24v2M103 26v2M111 26v2M134 26v2M140 26v2M149 26v2M250 26v2M251 26v2M2 28v2M12 28v2M32 28v2M57 28v2M60 28v2M83 28v2M88 28v2M119 28v2M142 28v2M2 30v2M25 30v2M28 30v2M77 30v2M88 30v2M91 30v2M111 30v2M135 30v2M139 30v2M178 30v2M181 30v2M222 30v2M226 30v2M16 32v2M35 32v2M48 32v2M115 32v2M121 32v2M122 32v2M124 32v2M11 34v2M19 34v2M85 34v2M95 34v2M110 34v2M128 34v2M146 34v2M224 34v2M237 34v2M10 36v2M47 36v2M54 36v2M81 36v2M118 36v2M127 36v2M157 36v2M171 36v2M172 36v2M189 36v2M197 36v2M213 36v2M229 36v2M234 36v2M241 36v2M26 38v2M42 38v2M54 38v2M58 38v2M85 38v2M99 38v2M102 38v2M130 38v2M146 38v2M150 38v2M158 38v2M217 38v2M230 38v2M233 38v2M245 38v2M248 38v2M249 38v2M3 40v2M8 40v2M20 40v2M60 40v2M73 40v2M78 40v2M92 40v2M108 40v2M127 40v2M136 40v2M157 40v2M193 40v2M201 40v2M202 40v2M217 40v2M231 40v2M251 40v2M22 42v2M49 42v2M60 42v2M67 42v2M73 42v2M123 42v2M132 42v2M137 42v2M186 42v2M233 42v2M249 42v2M10 44v2M12 44v2M66 44v2M70 44v2M76 44v2M114 44v2M122 44v2M170 44v2M176 44v2M250 44v2M10 46v2M36 46v2M43 46v2M57 46v2M64 46v2M78 46v2M119 46v2M134 46v2M150 46v2M152 46v2M181 46v2M195 46v2M234 46v2M243 46v2M32 48v2M34 48v2M47 48v2M53 48v2M83 48v2M110 48v2M132 48v2M133 48v2M180 48v2M212 48v2M220 48v2M229 48v2M14 50v2M31 50v2M65 50v2M120 50v2M177 50v2M205 50v2M221 50v2M229 50v2M252 50v2M49 52v2M63 52v2M70 52v2M84 52v2M119 52v2M120 52v2M163 52v2M182 52v2M237 52v2M12 54v2M14 54v2M18 54v2M35 54v2M46 54v2M53 54v2M66 54v2M73 54v2M106 54v2M115 54v2M133 54v2M181 54v2M32 56v2M41 56v2M53 56v2M71 56v2M126 56v2M202 56v2M203 56v2M210 56v2M250 56v2M31 58v2M42 58v2M51 58v2M66 58v2M68 58v2M131 58v2M152 58v2M155 58v2M178 58v2M179 58v2M212 58v2M214 58v2M226 58v2M35 60v2M74 60v2M81 60v2M96 60v2M104 60v2M117 60v2M173 60v2M213 60v2M14 62v2M26 62v2M41 62v2M53 62v2M55 62v2M62 62v2M64 62v2M75 62v2M76 62v2M182 62v2M193 62v2M196 62v2M222 62v2M223 62v2M226 62v2M240 62v2M251 62v2"/>
<path stroke="#858585" d="M38 0v2M98 0v2M125 0v2M141 0v2M250 0v2M96 2v2M129 2v2M171 2v2M222 2v2M51 4v2M107 4v2M112 4v2M127 4v2M134 4v2M158 4v2M188 4v2M199 4v2M216 4v2M240 4v2M241 4v2M244 4v2M3 6v2M12 6v2M13 6v2M137 6v2M180 6v2M2 8v2M62 8v2M74 8v2M102 8v2M161 8v2M190 8v2M236 8v2M13 10v2M44 10v2M152 10v2M167 10v2M169 10v2M231 10v2M98 12v2M100 12v2M103 12v2M112 12v2M150 12v2M181 12v2M219 12v2M251 12v2M38 14v2M93 14v2M253 14v2M47 16v2M56 16v2M72 16v2M133 16v2M157 16v2M171 16v2M214 16v2M226 16v2M13 18v2M36 18v2M111 18v2M127 18v2M141 18v2M180 18v2M190 18v2M227 18v2M248 18v2M24 20v2M51 20v2M56 20v2M88 20v2M94 20v2M107 20v2M136 20v2M158 20v2M197 20v2M219 20v2M41 22v2M77 22v2M93 22v2M126 22v2M139 22v2M145 22v2M162 22v2M180 22v2M225 22v2M10 24v2M60 24v2M88 24v2M90 24v2M102 24v2M170 24v2M189 24v2M225 24v2M64 26v2M113 26v2M129 26v2M178 26v2M193 26v2M224 26v2M237 26v2M179 28v2M223 28v2M241 28v2M4 30v2M9 30v2M107 30v2M110 30v2M254 30v2M20 32v2M91 32v2M107 32v2M165 32v2M232 32v2M248 32v2M16 34v2M82 34v2M84 34v2M141 34v2M153 34v2M160 34v2M216 34v2M17 36v2M41 36v2M56 36v2M104 36v2M108 36v2M124 36v2M147 36v2M150 36v2M222 36v2M252 36v2M45 38v2M48 38v2M80 38v2M109 38v2M19 40v2M95 40v2M178 40v2M70 42v2M78 42v2M79 42v2M92 42v2M135 42v2M172 42v2M203 42v2M84 44v2M94 44v2M95 44v2M154 44v2M212 44v2M222 44v2M253 44v2M5 46v2M49 46v2M50 46v2M115 46v2M141 46v2M148 46v2M201 46v2M210 46v2M251 46v2M19 48v2M21 48v2M52 48v2M106 48v2M113 48v2M123 48v2M127 48v2M128 48v2M129 48v2M210 48v2M219 48v2M37 50v2M41 50v2M95 50v2M123 50v2M152 50v2M227 50v2M95 52v2M152 52v2M20 54v2M41 54v2M98 54v2M127 54v2M136 54v2M205 54v2M232 54v2M245 54v2M26 56v2M51 56v2M64 56v2M83 56v2M190 56v2M206 56v2M1 58v2M24 58v2M45 58v2M124 58v2M197 58v2M220 58v2M19 60v2M28 60v2M42 60v2M59 60v2M128 60v2M162 60v2M163 60v2M181 60v2M194 60v2M203 60v2M230 60v2M9 62v2M33 62v2M127 62v2M155 62v2M232 62v2M242 62v2"/>
<path stroke="#909090" d="M66 0v2M127 2v2M225 2v2M24 4v2M98 4v2M153 4v2M217 4v2M239 4v2M163 8v2M206 8v2M232 8v2M5 10v2M43 10v2M150 10v2M159 10v2M200 10v2M70 12v2M133 12v2M112 14v2M190 14v2M22 16v2M126 18v2M136 18v2M157 18v2M178 18v2M214 18v2M217 18v2M242 18v2M55 20v2M64 20v2M92 20v2M128 20v2M140 20v2M147 20v2M188 20v2M191 20v2M50 22v2M66 22v2M78 22v2M97 22v2M187 22v2M232 22v2M8 24v2M89 24v2M149 24v2M181 24v2M241 24v2M27 26v2M75 26v2M192 26v2M8 28v2M47 28v2M79 28v2M100 28v2M135 28v2M16 30v2M18 30v2M39 30v2M85 30v2M86 30v2M137 30v2M158 30v2M174 30v2M198 30v2M205 30v2M49 32v2M51 32v2M70 32v2M101 32v2M110 32v2M181 32v2M197 32v2M246 32v2M3 34v2M4 36v2M137 36v2M144 36v2M184 36v2M194 36v2M66 38v2M124 38v2M135 38v2M218 38v2M28 40v2M37 40v2M62 40v2M93 40v2M133 40v2M165 40v2M82 42v2M85 42v2M140 42v2M155 42v2M192 42v2M206 42v2M4 44v2M42 44v2M81 44v2M0 46v2M33 46v2M136 46v2M172 46v2M179 46v2M236 46v2M64 48v2M94 48v2M130 48v2M152 48v2M174 48v2M215 48v2M16 50v2M47 52v2M103 52v2M114 52v2M178 52v2M188 52v2M215 52v2M116 54v2M195 54v2M246 54v2M27 56v2M40 56v2M48 56v2M62 56v2M82 56v2M99 56v2M219 56v2M224 56v2M39 58v2M59 58v2M127 58v2M190 58v2M44 60v2M88 60v2M120 60v2M152 60v2M158 60v2M206 60v2M243 60v2M59 62v2M107 62v2M143 62v2M184 62v2M237 62v2"/>
<path stroke="#9b9b9b" d="M23 0v2M135 0v2M179 0v2M32 2v2M51 2v2M75 2v2M115 2v2M248 2v2M47 6v2M106 6v2M167 6v2M189 6v2M15 8v2M16 8v2M21 8v2M23 8v2M47 8v2M83 8v2M207 10v2M12 12v2M53 12v2M227 12v2M65 14v2M154 14v2M2 16v2M11 16v2M16 16v2M43 16v2M90 16v2M120 16v2M234 16v2M84 18v2M101 18v2M38 20v2M149 20v2M209 20v2M53 22v2M191 22v2M16 24v2M37 24v2M230 24v2M54 26v2M57 26v2M82 26v2M191 26v2M3 28v2M245 28v2M56 30v2M84 30v2M167 30v2M183 30v2M197 30v2M61 32v2M76 32v2M145 32v2M208 32v2M138 34v2M152 34v2M86 36v2M131 36v2M183 36v2M12 38v2M18 38v2M165 38v2M215 38v2M236 38v2M9 40v2M32 40v2M56 40v2M84 40v2M203 40v2M222 40v2M14 42v2M51 44v2M52 44v2M169 44v2M21 46v2M31 46v2M116 46v2M191 46v2M63 48v2M224 48v2M247 48v2M27 50v2M49 50v2M56 50v2M60 50v2M105 50v2M211 50v2M102 52v2M212 52v2M77 54v2M142 54v2M243 54v2M24 56v2M25 56v2M54 56v2M193 56v2M217 56v2M86 58v2M186 58v2M34 60v2M78 60v2M127 60v2M164 62v2"/>
<path stroke="#a6a6a6" d="M163 0v2M186 0v2M55 2v2M92 2v2M106 2v2M195 2v2M223 2v2M247 2v2M19 6v2M135 6v2M191 6v2M89 8v2M110 8v2M195 8v2M247 10v2M11 12v2M66 12v2M69 14v2M152 14v2M184 14v2M143 16v2M178 16v2M98 18v2M107 18v2M184 20v2M108 22v2M122 22v2M201 22v2M252 22v2M70 24v2M22 26v2M63 26v2M201 26v2M119 30v2M121 30v2M192 30v2M195 30v2M242 30v2M132 32v2M107 36v2M74 38v2M152 42v2M16 44v2M119 44v2M173 44v2M16 46v2M47 46v2M76 46v2M85 46v2M39 48v2M161 48v2M201 48v2M242 48v2M183 50v2M9 52v2M53 52v2M67 52v2M94 52v2M184 52v2M252 54v2M111 56v2M178 56v2M5 58v2M17 58v2M72 58v2M208 58v2M3 60v2M4 62v2M23 62v2M220 62v2"/>
<path stroke="#b1b1b1" d="M50 0v2M122 2v2M119 4v2M18 6v2M27 6v2M55 6v2M103 6v2M142 6v2M99 8v2M229 8v2M38 10v2M218 10v2M250 10v2M251 10v2M136 12v2M84 14v2M191 16v2M223 18v2M30 20v2M84 20v2M7 22v2M38 22v2M64 22v2M83 22v2M59 26v2M109 26v2M153 26v2M251 28v2M27 32v2M52 34v2M127 34v2M218 36v2M76 40v2M87 40v2M214 40v2M243 40v2M237 42v2M38 44v2M26 50v2M224 50v2M159 54v2M223 56v2M91 58v2M200 58v2M216 58v2M165 60v2M163 62v2"/>
<path stroke="#bcbcbc" d="M15 4v2M43 8v2M79 8v2M147 8v2M53 10v2M70 10v2M31 12v2M47 14v2M6 16v2M243 16v2M55 24v2M231 24v2M142 26v2M80 30v2M221 30v2M228 30v2M50 34v2M207 36v2M238 46v2M11 48v2M18 48v2M199 48v2M152 54v2M7 60v2M15 60v2M89 60v2M114 62v2"/>
<path stroke="#c8c8c8" d="M90 2v2M39 4v2M62 4v2M237 8v2M132 10v2M164 14v2M237 14v2M53 16v2M137 22v2M61 30v2M233 34v2M170 38v2M160 40v2M102 46v2M78 48v2M161 54v2M253 54v2M195 58v2M224 60v2"/>
<path stroke="#d3d3d3" d="M158 2v2M126 4v2M230 6v2M41 10v2M62 12v2M42 34v2M194 34v2M84 36v2M95 36v2M156 44v2M157 44v2M70 46v2M113 50v2M79 54v2M26 60v2"/>
<path stroke="#dedede" d="M144 18v2M11 24v2M41 26v2M64 34v2M46 36v2M161 50v2M243 58v2"/>
<path stroke="#e9e9e9" d="M255 4v2M8 14v2M205 32v2M48 36v2M66 50v2"/>
<path stroke="#f4f4f4" d="M246 30v2"/>
<path stroke="#ffffff" d="M25 26v2M37 34v2"/>
</g></pattern>
<filter id="cm" x="0" y="0" width="1" height="1" color-interpolation-filters="sRGB">
<feComponentTransfer>
<feFuncR type="table" tableValues="0 0 0 0 0 0 0 0 0 0 0 0 0 0 0 0 0 0 0 0 0 0 0 0 0 0 0 0 0 0 0 0 0 0 0 0 0 0 0 0 0 0 0 0 0 0 0 0 0 0 0 0 0 0 0 0 0 0 0 0 0 0 0 0 0 0 0 0 0 0 0 0 0 0 0 0 0 0 0 0 0 0 0 0 0 0 0 0 0 0 0 0 0 0 0 0 0 0 0 0 0 0 0 0 0 0 0 0 0 0 0 0 0 0 0 0 0 0 0 0 0 0 0 0 0 0 0 0 0.014 0.031 0.048 0.065 0.082 0.099 0.116 0.133 0.15 0.167 0.184 0.201 0.218 0.235 0.252 0.269 0.286 0.303 0.32 0.337 0.354 0.371 0.388 0.405 0.422 0.439 0.456 0.473 0.49 0.506 0.523 0.54 0.556 0.573 0.59 0.606 0.623 0.639 0.656 0.673 0.689 0.706 0.723 0.739 0.756 0.772 0.789 0.806 0.822 0.839 0.856 0.872 0.889 0.905 0.922 0.939 0.955 0.972 0.988 1 1 1 1 1 1 1 1 1 1 1 1 1 1 1 1 1 1 1 1 1 1 1 1 1 1 1 1 1 1 1 1 1 1 1 1 1 1 1 1 1 1 1 1 1 1 1 1 1 1 1 1 1 1 1 1 1 1 1 1 1 1 1 1 1 1 1 1 1"/>
<feFuncG type="table" tableValues="0 0 0 0 0 0 0 0 0 0 0 0 0 0 0 0 0 0 0 0 0 0 0 0 0 0 0 0 0 0 0 0 0 0 0 0 0 0 0 0 0 0 0 0 0 0 0 0 0 0 0 0 0 0 0 0 0 0 0 0 0 0 0 0 0 0 0 0 0 0 0 0 0 0 0 0 0 0 0 0 0 0 0 0 0 0 0 0 0 0 0 0 0 0 0 0 0 0 0 0.002 0.02 0.037 0.055 0.073 0.091 0.108 0.126 0.144 0.162 0.179 0.197 0.215 0.232 0.25 0.268 0.286 0.303 0.321 0.339 0.357 0.374 0.392 0.41 0.428 0.445 0.463 0.481 0.499 0.502 0.502 0.502 0.502 0.502 0.502 0.502 0.502 0.502 0.502 0.502 0.502 0.502 0.502 0.502 0.502 0.502 0.502 0.502 0.502 0.502 0.502 0.502 0.502 0.502 0.502 0.502 0.502 0.502 0.502 0.502 0.502 0.502 0.502 0.502 0.502 0.502 0.502 0.502 0.502 0.502 0.502 0.502 0.502 0.502 0.502 0.502 0.502 0.502 0.502 0.502 0.502 0.502 0.502 0.502 0.502 0.502 0.502 0.502 0.507 0.524 0.541 0.558 0.575 0.591 0.608 0.625 0.642 0.659 0.676 0.693 0.709 0.726 0.743 0.76 0.777 0.794 0.811 0.827 0.844 0.861 0.878 0.895 0.912 0.929 0.945 0.962 0.979 0.996 1 1 1 1 1 1 1 1 1 1 1 1 1 1 1 1 1 1 1 1 1 1 1 1 1 1 1 1 1 1 1 1 1 1 1 1 1 1 1"/>
<feFuncB type="table" tableValues="0 0 0 0 0 0 0 0 0 0 0 0 0 0 0.001 0.003 0.004 0.006 0.007 0.009 0.01 0.012 0.013 0.014 0.016 0.017 0.019 0.02 0.022 0.023 0.024 0.026 0.027 0.029 0.03 0.032 0.033 0.035 0.036 0.037 0.039 0.042 0.045 0.049 0.052 0.056 0.059 0.063 0.066 0.07 0.073 0.077 0.08 0.084 0.087 0.091 0.094 0.098 0.101 0.104 0.108 0.111 0.115 0.118 0.122 0.125 0.129 0.132 0.136 0.139 0.147 0.161 0.175 0.189 0.203 0.217 0.231 0.245 0.258 0.272 0.286 0.3 0.314 0.328 0.342 0.356 0.37 0.384 0.397 0.411 0.425 0.439 0.453 0.467 0.481 0.495 0.509 0.523 0.537 0.549 0.547 0.546 0.544 0.542 0.541 0.539 0.537 0.536 0.534 0.532 0.531 0.529 0.527 0.526 0.524 0.522 0.521 0.519 0.517 0.516 0.514 0.512 0.511 0.509 0.507 0.506 0.504 0.502 0.488 0.471 0.454 0.437 0.42 0.403 0.386 0.369 0.352 0.335 0.318 0.301 0.284 0.267 0.25 0.233 0.216 0.199 0.182 0.165 0.148 0.131 0.114 0.097 0.08 0.063 0.046 0.029 0.012 0 0 0 0 0 0 0 0 0 0 0 0 0 0 0 0 0 0 0 0 0 0 0 0 0 0 0 0 0 0 0.01 0.044 0.078 0.112 0.146 0.18 0.213 0.247 0.281 0.315 0.349 0.383 0.417 0.45 0.484 0.518 0.552 0.586 0.62 0.654 0.687 0.721 0.755 0.789 0.823 0.857 0.89 0.924 0.958 0.992 1 1 1 1 1 1 1 1 1 1 1 1 1 1 1 1 1 1 1 1 1 1 1 1 1 1 1 1 1 1 1 1 1 1 1 1 1 1 1"/>
</feComponentTransfer>
</filter>
<clipPath id="lc"><circle cx="43.9" cy="44.1" r="24.3"/></clipPath>
</defs>
<rect width="3100" height="3064" fill="#202020"/>
<g filter="url(#cm)">
<rect x="100" y="120" width="3000" height="2904" fill="url(#vg)"/>
<g shape-rendering="crispEdges">
<rect x="499" y="120" width="1" height="2904" fill="#303030"/>
<rect x="500" y="120" width="1" height="2904" fill="#333333"/>
<rect x="599" y="120" width="1" height="2904" fill="#363636"/>
<rect x="600" y="120" width="1" height="2904" fill="#383838"/>
<rect x="899" y="120" width="1" height="2904" fill="#626262"/>
<rect x="900" y="120" width="1" height="2904" fill="#545454"/>
<rect x="1699" y="120" width="1" height="2904" fill="#818181"/>
<rect x="1700" y="120" width="1" height="2904" fill="#7e7e7e"/>
<rect x="2099" y="120" width="1" height="2904" fill="#858585"/>
<rect x="2100" y="120" width="1" height="2904" fill="#787878"/>
<rect x="2499" y="120" width="1" height="2904" fill="#808080"/>
<rect x="2500" y="120" width="1" height="2904" fill="#787878"/>
<rect x="2899" y="120" width="1" height="2904" fill="#6b6b6b"/>
<rect x="2900" y="120" width="1" height="2904" fill="#636363"/>
<rect x="3099" y="120" width="1" height="2904" fill="#bfbfbf"/>
</g>
<rect x="100" y="120" width="3000" height="2904" fill="url(#np)"/>
</g>
<g id="speclines" shape-rendering="crispEdges">
<rect x="100" y="604" width="3000" height="1" fill="#999"/>
<rect x="100" y="725" width="3000" height="1" fill="#999" opacity=".35"/>
<rect x="100" y="846" width="3000" height="1" fill="#999" opacity=".35"/>
<rect x="100" y="967" width="3000" height="1" fill="#999" opacity=".35"/>
<rect x="100" y="1088" width="3000" height="1" fill="#999" opacity=".35"/>
<rect x="100" y="1209" width="3000" height="1" fill="#999" opacity=".35"/>
<rect x="100" y="1935" width="3000" height="1" fill="#999" opacity=".35"/>
<rect x="100" y="2056" width="3000" height="1" fill="#999" opacity=".35"/>
<rect x="100" y="2177" width="3000" height="1" fill="#999" opacity=".35"/>
<rect x="100" y="2298" width="3000" height="1" fill="#999" opacity=".35"/>
<rect x="100" y="2419" width="3000" height="1" fill="#999" opacity=".35"/>
<rect x="100" y="2540" width="3000" height="1" fill="#999" opacity=".35"/>
<rect x="100" y="2661" width="3000" height="1" fill="#999" opacity=".35"/>
<rect x="100" y="2782" width="3000" height="1" fill="#999" opacity=".35"/>
<rect x="100" y="1814" width="3000" height="1" fill="#888"/>
<rect x="100" y="1815" width="3000" height="1" fill="#888" opacity=".3"/>
<rect x="100" y="2903" width="3000" height="1" fill="#888"/>
<rect x="100" y="2904" width="3000" height="1" fill="#888" opacity=".3"/>
</g>
<g id="logo">
<g clip-path="url(#lc)" fill="#fff">
<polygon points="10,51.31 51.31,10 10,10"/>
<polygon points="78,36.87 36.87,78 78,78"/>
<polygon points="16.97,47.63 25.62,39.82 27.82,41.18 28.45,41.08 51.40,17.22 55.17,18.54 18.54,54.70"/>
<polygon points="19.64,58.16 40.55,37.09 42.90,37.88 43.69,37.56 60.36,21.05 62.55,23.10 23.25,62.55"/>
<polygon points="25.14,65.07 45.73,44.16 48.09,45.10 48.87,44.63 66.32,27.18 68.21,29.54 29.85,67.90"/>
<polygon points="32.99,69.47 61.91,39.92 64.27,40.86 65.05,40.39 69.78,35.82 71.04,39.28 39.90,70.41"/>
</g>
<text transform="translate(0 61.2) scale(.92 1)" x="85.652 121.413 150.761" y="0" font-size="48" font-weight="700">GFZ</text>
<rect x="113" y="43.3" width="8.6" height="5.4" fill="#202020"/>
<text x="170" y="40.9" font-size="16" letter-spacing="0.45">Helmholtz Centre</text>
<text x="170" y="61.1" font-size="16" letter-spacing="0.4">for Geosciences</text>
</g>
<g id="colorbar">
<text x="829.5" y="35.1" font-size="20" text-anchor="end" letter-spacing="0.2">-75 dBm</text>
<rect x="850" y="20" width="1500" height="20" fill="url(#cb)"/>
<text x="2389.8" y="35.1" font-size="20" letter-spacing="0.3">-55 dBm</text>
</g>
<g id="ticks" shape-rendering="crispEdges" fill="none" stroke-width="2">
<path d="M200 90v29M300 90v29M400 90v29M500 90v29M600 90v29M700 90v29M800 90v29M900 90v29M1000 90v29M1100 90v29M1200 90v29M1300 90v29M1400 90v29M1500 90v29M1600 90v29M1700 90v29M1800 90v29M1900 90v29M2000 90v29M2100 90v29M2200 90v29M2300 90v29M2400 90v29M2500 90v29M2600 90v29M2700 90v29M2800 90v29M2900 90v29M3000 90v29" stroke="#a0a0a0"/>
<path d="M100.5 90v29M3099.5 90v29" stroke="#a0a0a0" stroke-width="1"/>
<path d="M2120 90v29M2140 90v29M2160 90v29M2180 90v29M2200 90v29M2220 90v29M2240 90v29M2260 90v29M2280 90v29M2300 90v29M2320 90v29M2340 90v29M2360 90v29M2380 90v29M2400 90v29M2420 90v29M2440 90v29M2460 90v29M2480 90v29M2500 90v29M2520 90v29M2540 90v29M2560 90v29M2580 90v29M2600 90v29M2620 90v29M2640 90v29M2660 90v29M2680 90v29M2700 90v29M2720 90v29M2740 90v29M2760 90v29M2780 90v29M2800 90v29M2820 90v29M2840 90v29M2860 90v29M2880 90v29M2900 90v29" stroke="#10a0a0"/>
<path d="M2220 60v30M2270 60v30M2320 60v30M2370 60v30M2420 60v30M2470 60v30M2520 60v30M2570 60v30M2620 60v30M2670 60v30M2720 60v30M2770 60v30M2820 60v30M2940 60v30" stroke="#a0a010"/>
</g>
<g id="freqs" font-size="16" font-weight="700" text-anchor="middle">
<text x="600" y="84.8">2.25</text>
<text x="1100" y="84.8">2.3</text>
<text x="1600" y="84.8">2.35</text>
<text x="2100" y="84.8">2.4</text>
<text x="3000" y="84.8">2.49</text>
</g>
<g id="hours">
<path d="M80 119h3020M80 240h3020M80 361h3020M80 482h3020M80 603h3020M80 724h3020M80 845h3020M80 966h3020M80 1087h3020M80 1208h3020M80 1329h3020M80 1450h3020M80 1571h3020M80 1692h3020M80 1813h3020M80 1934h3020M80 2055h3020M80 2176h3020M80 2297h3020M80 2418h3020M80 2539h3020M80 2660h3020M80 2781h3020M80 2902h3020M80 3023h3020" stroke="#fff" stroke-width="1" transform="translate(0 .5)" fill="none" shape-rendering="crispEdges"/>
<g font-size="20" letter-spacing="0.8" style="font-kerning:none">
<text x="19.5" y="127">24:00</text>
<text x="19.5" y="248">23:00</text>
<text x="19.5" y="369">22:00</text>
<text x="19.5" y="490">21:00</text>
<text x="19.5" y="611">20:00</text>
<text x="21" y="732" letter-spacing="0.45">19:00</text>
<text x="21" y="853" letter-spacing="0.45">18:00</text>
<text x="21" y="974" letter-spacing="0.45">17:00</text>
<text x="21" y="1095" letter-spacing="0.45">16:00</text>
<text x="21" y="1216" letter-spacing="0.45">15:00</text>
<text x="21" y="1337" letter-spacing="0.45">14:00</text>
<text x="21" y="1458" letter-spacing="0.45">13:00</text>
<text x="21" y="1579" letter-spacing="0.45">12:00</text>
<text x="21" y="1700" letter-spacing="0.45">11:00</text>
<text x="21" y="1821" letter-spacing="0.45">10:00</text>
<text x="19.5" y="1942">9:00</text>
<text x="19.5" y="2063">8:00</text>
<text x="19.5" y="2184">7:00</text>
<text x="19.5" y="2305">6:00</text>
<text x="19.5" y="2426">5:00</text>
<text x="19.5" y="2547">4:00</text>
<text x="19.5" y="2668">3:00</text>
<text x="19.5" y="2789">2:00</text>
<text x="21" y="2910" letter-spacing="0.30">1:00</text>
<text x="19.5" y="3031">0:00</text>
</g>
</g>
<g id="footer" font-size="20">
<text x="99" y="3049.8" letter-spacing="0.42">https://doi.org/10.5880/GFZ.1.2.2024.003</text>
<text x="1601" y="3050.7" text-anchor="middle" letter-spacing="0.33">1_2200_2500_10000_40_0</text>
<text x="3090" y="3054.2" text-anchor="end" letter-spacing="0.55">2024-12-14</text>
</g>
</svg>
</body></html>
